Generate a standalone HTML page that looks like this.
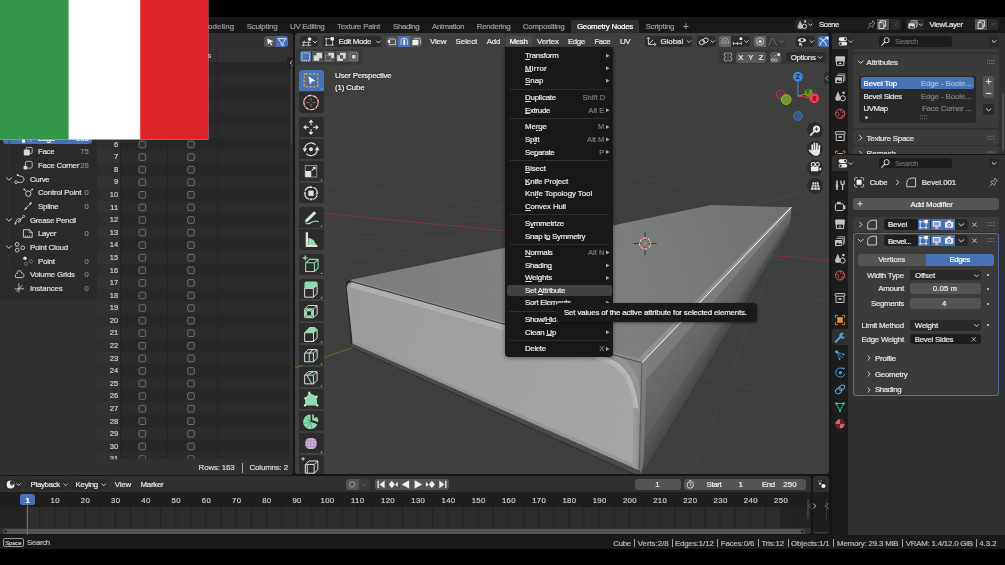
<!DOCTYPE html>
<html><head><meta charset="utf-8"><title>Blender</title>
<style>
html,body{margin:0;padding:0;background:#000;}
body{width:1005px;height:565px;position:relative;overflow:hidden;font-family:"Liberation Sans",sans-serif;}
#root{position:absolute;left:0;top:0;width:1005px;height:565px;overflow:hidden;background:#000;will-change:transform;}
#root div,#root svg,#root span{position:absolute;}
.t{white-space:nowrap;line-height:12px;height:12px;-webkit-text-stroke:0.22px currentColor;}
</style></head><body><div id="root">
<div style="left:0px;top:17px;width:1005px;height:531.5px;background:#161616;"></div>
<div style="left:0px;top:17px;width:1005px;height:16px;background:#181818;"></div>
<span class="t" style="left:201.30px;top:21px;color:#9a9a9a;font-size:7.9px;letter-spacing:0.117px;">Modeling</span>
<span class="t" style="left:246.70px;top:21px;color:#9a9a9a;font-size:7.9px;letter-spacing:-0.189px;">Sculpting</span>
<span class="t" style="left:290.00px;top:21px;color:#9a9a9a;font-size:7.9px;letter-spacing:-0.283px;">UV Editing</span>
<span class="t" style="left:337.00px;top:21px;color:#9a9a9a;font-size:7.9px;letter-spacing:-0.239px;">Texture Paint</span>
<span class="t" style="left:393.00px;top:21px;color:#9a9a9a;font-size:7.9px;letter-spacing:-0.385px;">Shading</span>
<span class="t" style="left:432.00px;top:21px;color:#9a9a9a;font-size:7.9px;letter-spacing:-0.326px;">Animation</span>
<span class="t" style="left:476.80px;top:21px;color:#9a9a9a;font-size:7.9px;letter-spacing:-0.317px;">Rendering</span>
<span class="t" style="left:522.80px;top:21px;color:#9a9a9a;font-size:7.9px;letter-spacing:-0.210px;">Compositing</span>
<span class="t" style="left:645.70px;top:21px;color:#9a9a9a;font-size:7.9px;letter-spacing:-0.237px;">Scripting</span>
<div style="left:571px;top:20px;width:67.5px;height:13px;background:#303030;border-radius:3px 3px 0 0;"></div>
<span class="t" style="left:577.00px;top:21px;color:#ffffff;font-size:7.9px;letter-spacing:-0.265px;">Geometry Nodes</span>
<span class="t" style="left:683.00px;top:21px;color:#9a9a9a;font-size:10px;">+</span>
<div style="left:794.9px;top:19px;width:18.6px;height:11px;background:#282828;border-radius:3px 0 0 3px;"></div>
<div style="left:813.5px;top:19px;width:63.5px;height:11px;background:#1d1d1d;"></div>
<div style="left:877.3px;top:19px;width:12.2px;height:11px;background:#545454;"></div>
<div style="left:889.9px;top:19px;width:11.1px;height:11px;background:#2a2a2a;border-radius:0 3px 3px 0;"></div>
<svg style="left:794.9px;top:19px;" width="107" height="11" viewBox="0 0 107 11"><path d="M5.2,1.4 l2.6,5.8 a2.6,2.6 0 0 1 -5.2,0 Z" fill="#b8b8b8"/><circle cx="9.4" cy="7.4" r="2.2" fill="none" stroke="#e0e0e0" stroke-width="0.9"/><circle cx="10.2" cy="2.4" r="1.1" fill="#e0e0e0"/><polyline points="13.7,5.0 15.4,6.6 17.1,5.0" fill="none" stroke="#d8d8d8" stroke-width="0.9" stroke-linecap="round" stroke-linejoin="round"/><path d="M77.4,1.6 l2.6,2.6 l-0.9,0.4 l-1.3,1.5 l0.2,1.5 l-0.9,0.8 l-3.2,-3.2 l0.8,-0.9 l1.5,0.2 l1.5,-1.3 Z M75.4,6.6 L72.8,9.4" fill="none" stroke="#9a9a9a" stroke-width="0.8" stroke-linejoin="round"/><path d="M85.2,3.8 V1.8 h5.2 v5.6 h-1.6" fill="none" stroke="#e8e8e8" stroke-width="0.9"/><path d="M84,3.6 h3.4 l1.6,1.6 v4.2 h-5 Z" fill="none" stroke="#e8e8e8" stroke-width="0.9" stroke-linejoin="round"/><path d="M98.6,3.4 l4,4.2 M102.6,3.4 l-4,4.2" stroke="#4a4a4a" stroke-width="0.9"/></svg>
<span class="t" style="left:818.90px;top:19px;color:#e2e2e2;font-size:7.9px;letter-spacing:-0.460px;">Scene</span>
<div style="left:905.8px;top:19px;width:18.2px;height:11px;background:#282828;border-radius:3px 0 0 3px;"></div>
<div style="left:924px;top:19px;width:50.8px;height:11px;background:#1d1d1d;"></div>
<div style="left:975.1px;top:19px;width:12.1px;height:11px;background:#545454;"></div>
<div style="left:987.6px;top:19px;width:11.5px;height:11px;background:#2a2a2a;border-radius:0 3px 3px 0;"></div>
<svg style="left:905.8px;top:19px;" width="94" height="11" viewBox="0 0 94 11"><path d="M5,1.6 h6.4 v6" fill="none" stroke="#9a9a9a" stroke-width="0.9"/><path d="M3.8,3 h6.4 v6" fill="none" stroke="#b8b8b8" stroke-width="0.9"/><rect x="2.4" y="4.2" width="6.4" height="5.4" rx="0.6" fill="#e0e0e0"/><path d="M3.2,8.8 l1.8,-2.4 l1.3,1.5 l0.9,-0.9 l1.3,1.8 Z" fill="#282828"/><polyline points="13.1,5.0 14.8,6.6 16.5,5.0" fill="none" stroke="#d8d8d8" stroke-width="0.9" stroke-linecap="round" stroke-linejoin="round"/><path d="M73.2,3.8 V1.8 h5.2 v5.6 h-1.6" fill="none" stroke="#e8e8e8" stroke-width="0.9"/><path d="M72,3.6 h3.4 l1.6,1.6 v4.2 h-5 Z" fill="none" stroke="#e8e8e8" stroke-width="0.9" stroke-linejoin="round"/><path d="M85.6,3.4 l4,4.2 M89.6,3.4 l-4,4.2" stroke="#4a4a4a" stroke-width="0.9"/></svg>
<span class="t" style="left:929.50px;top:19px;color:#e2e2e2;font-size:7.9px;letter-spacing:-0.383px;">ViewLayer</span>
<div style="left:0px;top:33px;width:293px;height:442px;background:#303030;border-radius:0 3px 3px 0;"></div>
<div style="left:0px;top:49px;width:97px;height:250px;background:#2a2a2a;"></div>
<div style="left:97px;top:49px;width:196px;height:12.8px;background:#313131;"></div>
<div style="left:97px;top:61.8px;width:193.4px;height:397.4px;background:#272727;"></div>
<div style="left:97px;top:74.91px;width:193.4px;height:12.58px;background:#2b2b2b;"></div>
<div style="left:97px;top:100.07px;width:193.4px;height:12.58px;background:#2b2b2b;"></div>
<div style="left:97px;top:125.23px;width:193.4px;height:12.58px;background:#2b2b2b;"></div>
<div style="left:97px;top:150.39px;width:193.4px;height:12.58px;background:#2b2b2b;"></div>
<div style="left:97px;top:175.55px;width:193.4px;height:12.58px;background:#2b2b2b;"></div>
<div style="left:97px;top:200.71px;width:193.4px;height:12.58px;background:#2b2b2b;"></div>
<div style="left:97px;top:225.87px;width:193.4px;height:12.58px;background:#2b2b2b;"></div>
<div style="left:97px;top:251.03px;width:193.4px;height:12.58px;background:#2b2b2b;"></div>
<div style="left:97px;top:276.19px;width:193.4px;height:12.58px;background:#2b2b2b;"></div>
<div style="left:97px;top:301.35px;width:193.4px;height:12.58px;background:#2b2b2b;"></div>
<div style="left:97px;top:326.51px;width:193.4px;height:12.58px;background:#2b2b2b;"></div>
<div style="left:97px;top:351.67px;width:193.4px;height:12.58px;background:#2b2b2b;"></div>
<div style="left:97px;top:376.83px;width:193.4px;height:12.58px;background:#2b2b2b;"></div>
<div style="left:97px;top:401.99px;width:193.4px;height:12.58px;background:#2b2b2b;"></div>
<div style="left:97px;top:427.15px;width:193.4px;height:12.58px;background:#2b2b2b;"></div>
<div style="left:97px;top:452.31px;width:193.4px;height:6.89px;background:#2b2b2b;"></div>
<div style="left:97px;top:61.6px;width:23.4px;height:397.6px;background:rgba(255,255,255,0.035);"></div>
<div style="left:120.2px;top:49px;width:0.8px;height:410.2px;background:#232323;"></div>
<div style="left:166.8px;top:49px;width:0.8px;height:410.2px;background:#232323;"></div>
<div style="left:217.2px;top:49px;width:0.8px;height:410.2px;background:#232323;"></div>
<span class="t" style="left:171.50px;top:50px;color:#c8c8c8;font-size:7.9px;letter-spacing:-0.202px;">Bevel Sides</span>
<span class="t" style="left:125.50px;top:50px;color:#c8c8c8;font-size:7.9px;letter-spacing:-0.172px;">Bevel Top</span>
<span class="t" style="left:113.97px;top:63px;color:#cccccc;font-size:7.6px;">0</span>
<span class="t" style="left:113.97px;top:76px;color:#cccccc;font-size:7.6px;">1</span>
<span class="t" style="left:113.97px;top:88px;color:#cccccc;font-size:7.6px;">2</span>
<span class="t" style="left:113.97px;top:101px;color:#cccccc;font-size:7.6px;">3</span>
<span class="t" style="left:113.97px;top:114px;color:#cccccc;font-size:7.6px;">4</span>
<span class="t" style="left:113.97px;top:126px;color:#cccccc;font-size:7.6px;">5</span>
<span class="t" style="left:113.97px;top:139px;color:#cccccc;font-size:7.6px;">6</span>
<span class="t" style="left:113.97px;top:151px;color:#cccccc;font-size:7.6px;">7</span>
<span class="t" style="left:113.97px;top:164px;color:#cccccc;font-size:7.6px;">8</span>
<span class="t" style="left:113.97px;top:176px;color:#cccccc;font-size:7.6px;">9</span>
<span class="t" style="left:109.75px;top:189px;color:#cccccc;font-size:7.6px;">10</span>
<span class="t" style="left:110.31px;top:202px;color:#cccccc;font-size:7.6px;">11</span>
<span class="t" style="left:109.75px;top:214px;color:#cccccc;font-size:7.6px;">12</span>
<span class="t" style="left:109.75px;top:227px;color:#cccccc;font-size:7.6px;">13</span>
<span class="t" style="left:109.75px;top:239px;color:#cccccc;font-size:7.6px;">14</span>
<span class="t" style="left:109.75px;top:252px;color:#cccccc;font-size:7.6px;">15</span>
<span class="t" style="left:109.75px;top:265px;color:#cccccc;font-size:7.6px;">16</span>
<span class="t" style="left:109.75px;top:277px;color:#cccccc;font-size:7.6px;">17</span>
<span class="t" style="left:109.75px;top:290px;color:#cccccc;font-size:7.6px;">18</span>
<span class="t" style="left:109.75px;top:302px;color:#cccccc;font-size:7.6px;">19</span>
<span class="t" style="left:109.75px;top:315px;color:#cccccc;font-size:7.6px;">20</span>
<span class="t" style="left:109.75px;top:327px;color:#cccccc;font-size:7.6px;">21</span>
<span class="t" style="left:109.75px;top:340px;color:#cccccc;font-size:7.6px;">22</span>
<span class="t" style="left:109.75px;top:353px;color:#cccccc;font-size:7.6px;">23</span>
<span class="t" style="left:109.75px;top:365px;color:#cccccc;font-size:7.6px;">24</span>
<span class="t" style="left:109.75px;top:378px;color:#cccccc;font-size:7.6px;">25</span>
<span class="t" style="left:109.75px;top:390px;color:#cccccc;font-size:7.6px;">26</span>
<span class="t" style="left:109.75px;top:403px;color:#cccccc;font-size:7.6px;">27</span>
<span class="t" style="left:109.75px;top:416px;color:#cccccc;font-size:7.6px;">28</span>
<span class="t" style="left:109.75px;top:428px;color:#cccccc;font-size:7.6px;">29</span>
<span class="t" style="left:109.75px;top:441px;color:#cccccc;font-size:7.6px;">30</span>
<span class="t" style="left:109.75px;top:453px;color:#cccccc;font-size:7.6px;clip-path:inset(0 0 5.4px 0);">31</span>
<svg style="left:0px;top:61.6px;" width="293" height="397.6" viewBox="0 0 293 397.6"><rect x="139.05" y="3.72" width="6.6" height="6.6" rx="1.2" fill="#2d2d2d" stroke="#777777" stroke-width="0.9"/><rect x="187.70" y="3.72" width="6.6" height="6.6" rx="1.2" fill="#2d2d2d" stroke="#777777" stroke-width="0.9"/><rect x="139.05" y="16.30" width="6.6" height="6.6" rx="1.2" fill="#2d2d2d" stroke="#777777" stroke-width="0.9"/><rect x="187.70" y="16.30" width="6.6" height="6.6" rx="1.2" fill="#2d2d2d" stroke="#777777" stroke-width="0.9"/><rect x="139.05" y="28.88" width="6.6" height="6.6" rx="1.2" fill="#2d2d2d" stroke="#777777" stroke-width="0.9"/><rect x="187.70" y="28.88" width="6.6" height="6.6" rx="1.2" fill="#2d2d2d" stroke="#777777" stroke-width="0.9"/><rect x="139.05" y="41.46" width="6.6" height="6.6" rx="1.2" fill="#2d2d2d" stroke="#777777" stroke-width="0.9"/><rect x="187.70" y="41.46" width="6.6" height="6.6" rx="1.2" fill="#2d2d2d" stroke="#777777" stroke-width="0.9"/><rect x="139.05" y="54.04" width="6.6" height="6.6" rx="1.2" fill="#2d2d2d" stroke="#777777" stroke-width="0.9"/><rect x="187.70" y="54.04" width="6.6" height="6.6" rx="1.2" fill="#2d2d2d" stroke="#777777" stroke-width="0.9"/><rect x="139.05" y="66.62" width="6.6" height="6.6" rx="1.2" fill="#2d2d2d" stroke="#777777" stroke-width="0.9"/><rect x="187.70" y="66.62" width="6.6" height="6.6" rx="1.2" fill="#2d2d2d" stroke="#777777" stroke-width="0.9"/><rect x="139.05" y="79.20" width="6.6" height="6.6" rx="1.2" fill="#2d2d2d" stroke="#777777" stroke-width="0.9"/><rect x="187.70" y="79.20" width="6.6" height="6.6" rx="1.2" fill="#2d2d2d" stroke="#777777" stroke-width="0.9"/><rect x="139.05" y="91.78" width="6.6" height="6.6" rx="1.2" fill="#2d2d2d" stroke="#777777" stroke-width="0.9"/><rect x="187.70" y="91.78" width="6.6" height="6.6" rx="1.2" fill="#2d2d2d" stroke="#777777" stroke-width="0.9"/><rect x="139.05" y="104.36" width="6.6" height="6.6" rx="1.2" fill="#2d2d2d" stroke="#777777" stroke-width="0.9"/><rect x="187.70" y="104.36" width="6.6" height="6.6" rx="1.2" fill="#2d2d2d" stroke="#777777" stroke-width="0.9"/><rect x="139.05" y="116.94" width="6.6" height="6.6" rx="1.2" fill="#2d2d2d" stroke="#777777" stroke-width="0.9"/><rect x="187.70" y="116.94" width="6.6" height="6.6" rx="1.2" fill="#2d2d2d" stroke="#777777" stroke-width="0.9"/><rect x="139.05" y="129.52" width="6.6" height="6.6" rx="1.2" fill="#2d2d2d" stroke="#777777" stroke-width="0.9"/><rect x="187.70" y="129.52" width="6.6" height="6.6" rx="1.2" fill="#2d2d2d" stroke="#777777" stroke-width="0.9"/><rect x="139.05" y="142.10" width="6.6" height="6.6" rx="1.2" fill="#2d2d2d" stroke="#777777" stroke-width="0.9"/><rect x="187.70" y="142.10" width="6.6" height="6.6" rx="1.2" fill="#2d2d2d" stroke="#777777" stroke-width="0.9"/><rect x="139.05" y="154.68" width="6.6" height="6.6" rx="1.2" fill="#2d2d2d" stroke="#777777" stroke-width="0.9"/><rect x="187.70" y="154.68" width="6.6" height="6.6" rx="1.2" fill="#2d2d2d" stroke="#777777" stroke-width="0.9"/><rect x="139.05" y="167.26" width="6.6" height="6.6" rx="1.2" fill="#2d2d2d" stroke="#777777" stroke-width="0.9"/><rect x="187.70" y="167.26" width="6.6" height="6.6" rx="1.2" fill="#2d2d2d" stroke="#777777" stroke-width="0.9"/><rect x="139.05" y="179.84" width="6.6" height="6.6" rx="1.2" fill="#2d2d2d" stroke="#777777" stroke-width="0.9"/><rect x="187.70" y="179.84" width="6.6" height="6.6" rx="1.2" fill="#2d2d2d" stroke="#777777" stroke-width="0.9"/><rect x="139.05" y="192.42" width="6.6" height="6.6" rx="1.2" fill="#2d2d2d" stroke="#777777" stroke-width="0.9"/><rect x="187.70" y="192.42" width="6.6" height="6.6" rx="1.2" fill="#2d2d2d" stroke="#777777" stroke-width="0.9"/><rect x="139.05" y="205.00" width="6.6" height="6.6" rx="1.2" fill="#2d2d2d" stroke="#777777" stroke-width="0.9"/><rect x="187.70" y="205.00" width="6.6" height="6.6" rx="1.2" fill="#2d2d2d" stroke="#777777" stroke-width="0.9"/><rect x="139.05" y="217.58" width="6.6" height="6.6" rx="1.2" fill="#2d2d2d" stroke="#777777" stroke-width="0.9"/><rect x="187.70" y="217.58" width="6.6" height="6.6" rx="1.2" fill="#2d2d2d" stroke="#777777" stroke-width="0.9"/><rect x="139.05" y="230.16" width="6.6" height="6.6" rx="1.2" fill="#2d2d2d" stroke="#777777" stroke-width="0.9"/><rect x="187.70" y="230.16" width="6.6" height="6.6" rx="1.2" fill="#2d2d2d" stroke="#777777" stroke-width="0.9"/><rect x="139.05" y="242.74" width="6.6" height="6.6" rx="1.2" fill="#2d2d2d" stroke="#777777" stroke-width="0.9"/><rect x="187.70" y="242.74" width="6.6" height="6.6" rx="1.2" fill="#2d2d2d" stroke="#777777" stroke-width="0.9"/><rect x="139.05" y="255.32" width="6.6" height="6.6" rx="1.2" fill="#2d2d2d" stroke="#777777" stroke-width="0.9"/><rect x="187.70" y="255.32" width="6.6" height="6.6" rx="1.2" fill="#2d2d2d" stroke="#777777" stroke-width="0.9"/><rect x="139.05" y="267.90" width="6.6" height="6.6" rx="1.2" fill="#2d2d2d" stroke="#777777" stroke-width="0.9"/><rect x="187.70" y="267.90" width="6.6" height="6.6" rx="1.2" fill="#2d2d2d" stroke="#777777" stroke-width="0.9"/><rect x="139.05" y="280.48" width="6.6" height="6.6" rx="1.2" fill="#2d2d2d" stroke="#777777" stroke-width="0.9"/><rect x="187.70" y="280.48" width="6.6" height="6.6" rx="1.2" fill="#2d2d2d" stroke="#777777" stroke-width="0.9"/><rect x="139.05" y="293.06" width="6.6" height="6.6" rx="1.2" fill="#2d2d2d" stroke="#777777" stroke-width="0.9"/><rect x="187.70" y="293.06" width="6.6" height="6.6" rx="1.2" fill="#2d2d2d" stroke="#777777" stroke-width="0.9"/><rect x="139.05" y="305.64" width="6.6" height="6.6" rx="1.2" fill="#2d2d2d" stroke="#777777" stroke-width="0.9"/><rect x="187.70" y="305.64" width="6.6" height="6.6" rx="1.2" fill="#2d2d2d" stroke="#777777" stroke-width="0.9"/><rect x="139.05" y="318.22" width="6.6" height="6.6" rx="1.2" fill="#2d2d2d" stroke="#777777" stroke-width="0.9"/><rect x="187.70" y="318.22" width="6.6" height="6.6" rx="1.2" fill="#2d2d2d" stroke="#777777" stroke-width="0.9"/><rect x="139.05" y="330.80" width="6.6" height="6.6" rx="1.2" fill="#2d2d2d" stroke="#777777" stroke-width="0.9"/><rect x="187.70" y="330.80" width="6.6" height="6.6" rx="1.2" fill="#2d2d2d" stroke="#777777" stroke-width="0.9"/><rect x="139.05" y="343.38" width="6.6" height="6.6" rx="1.2" fill="#2d2d2d" stroke="#777777" stroke-width="0.9"/><rect x="187.70" y="343.38" width="6.6" height="6.6" rx="1.2" fill="#2d2d2d" stroke="#777777" stroke-width="0.9"/><rect x="139.05" y="355.96" width="6.6" height="6.6" rx="1.2" fill="#2d2d2d" stroke="#777777" stroke-width="0.9"/><rect x="187.70" y="355.96" width="6.6" height="6.6" rx="1.2" fill="#2d2d2d" stroke="#777777" stroke-width="0.9"/><rect x="139.05" y="368.54" width="6.6" height="6.6" rx="1.2" fill="#2d2d2d" stroke="#777777" stroke-width="0.9"/><rect x="187.70" y="368.54" width="6.6" height="6.6" rx="1.2" fill="#2d2d2d" stroke="#777777" stroke-width="0.9"/><rect x="139.05" y="381.12" width="6.6" height="6.6" rx="1.2" fill="#2d2d2d" stroke="#777777" stroke-width="0.9"/><rect x="187.70" y="381.12" width="6.6" height="6.6" rx="1.2" fill="#2d2d2d" stroke="#777777" stroke-width="0.9"/><path d="M139.2,397.6 V394.7 Q139.2,393.7 140.2,393.7 H144.5 Q145.5,393.7 145.5,394.7 V397.6" fill="none" stroke="#6e6e6e" stroke-width="0.8"/><path d="M187.8,397.6 V394.7 Q187.8,393.7 188.8,393.7 H193.2 Q194.2,393.7 194.2,394.7 V397.6" fill="none" stroke="#6e6e6e" stroke-width="0.8"/></svg>
<span class="t" style="left:198.60px;top:462px;color:#d8d8d8;font-size:7.9px;letter-spacing:-0.147px;">Rows: 163</span>
<div style="left:242.1px;top:462.5px;width:0.9px;height:10px;background:#b0b0b0;"></div>
<span class="t" style="left:249.50px;top:462px;color:#d8d8d8;font-size:7.9px;letter-spacing:-0.146px;">Columns: 2</span>
<div style="left:263.7px;top:35.5px;width:12.2px;height:11.7px;background:#545454;border-radius:3px 0 0 3px;"></div>
<div style="left:275.9px;top:35.5px;width:12.1px;height:11.7px;background:#4772b3;border-radius:0 3px 3px 0;"></div>
<svg style="left:263.7px;top:35.5px;" width="24.4" height="11.7" viewBox="0 0 24.4 11.7"><path d="M3.2,2.6 L9.6,5.2 L6.9,6.2 L8.3,9 L7.2,9.5 L5.9,6.8 L3.9,8.6 Z" fill="#f0f0f0"/><path d="M14,2.7 H22.2 L19.1,6.3 V9.6 L17.1,8.6 V6.3 Z" fill="none" stroke="#f4f4f4" stroke-width="0.9" stroke-linejoin="round"/></svg>
<div style="left:287.4px;top:57.4px;width:5.6px;height:11.4px;background:#232323;border-radius:3px 0 0 3px;"></div>
<svg style="left:287px;top:58px;" width="8" height="10" viewBox="0 0 8 10"><polyline points="5.5,2.6 3.1,5.0 5.5,7.4" fill="none" stroke="#b8b8b8" stroke-width="0.9" stroke-linecap="round" stroke-linejoin="round"/></svg>
<div style="left:290.7px;top:62px;width:1.7px;height:81.3px;background:#464646;border-radius:1px;"></div>
<div style="left:3px;top:131.6px;width:89px;height:12.2px;background:#4772b3;border-radius:3px;"></div>
<span class="t" style="left:38.00px;top:133px;color:#ffffff;font-size:7.9px;letter-spacing:-0.463px;">Edge</span>
<span class="t" style="left:76.12px;top:133px;color:#dfe6f2;font-size:7.6px;">163</span>
<svg style="left:20px;top:131px;" width="14" height="12" viewBox="0 0 14 12"><path d="M3.4,10.4 V4 H9.8" fill="none" stroke="#ffffff" stroke-width="0.9"/><rect x="2" y="8.6" width="3" height="3" fill="#ffffff"/><path d="M5.8,6 h5 v5" fill="none" stroke="#d0d8e8" stroke-width="0.7"/></svg>
<span class="t" style="left:38.00px;top:146px;color:#dedede;font-size:7.9px;letter-spacing:-0.341px;">Face</span>
<span class="t" style="left:80.35px;top:146px;color:#858585;font-size:7.6px;">75</span>
<span class="t" style="left:38.00px;top:160px;color:#dedede;font-size:7.9px;letter-spacing:-0.255px;">Face Corner</span>
<span class="t" style="left:80.35px;top:160px;color:#858585;font-size:7.6px;">26</span>
<span class="t" style="left:29.90px;top:174px;color:#dedede;font-size:7.9px;letter-spacing:-0.295px;">Curve</span>
<span class="t" style="left:38.00px;top:187px;color:#dedede;font-size:7.9px;letter-spacing:-0.182px;">Control Point</span>
<span class="t" style="left:84.57px;top:187px;color:#858585;font-size:7.6px;">0</span>
<span class="t" style="left:38.00px;top:201px;color:#dedede;font-size:7.9px;letter-spacing:-0.244px;">Spline</span>
<span class="t" style="left:84.57px;top:201px;color:#858585;font-size:7.6px;">0</span>
<span class="t" style="left:29.90px;top:215px;color:#dedede;font-size:7.9px;letter-spacing:-0.278px;">Grease Pencil</span>
<span class="t" style="left:38.00px;top:228px;color:#dedede;font-size:7.9px;letter-spacing:-0.352px;">Layer</span>
<span class="t" style="left:84.57px;top:228px;color:#858585;font-size:7.6px;">0</span>
<span class="t" style="left:29.90px;top:242px;color:#dedede;font-size:7.9px;letter-spacing:-0.259px;">Point Cloud</span>
<span class="t" style="left:38.00px;top:256px;color:#dedede;font-size:7.9px;letter-spacing:-0.261px;">Point</span>
<span class="t" style="left:84.57px;top:256px;color:#858585;font-size:7.6px;">0</span>
<span class="t" style="left:29.90px;top:269px;color:#dedede;font-size:7.9px;letter-spacing:-0.202px;">Volume Grids</span>
<span class="t" style="left:84.57px;top:269px;color:#858585;font-size:7.6px;">0</span>
<span class="t" style="left:29.90px;top:283px;color:#dedede;font-size:7.9px;letter-spacing:-0.113px;">Instances</span>
<span class="t" style="left:84.57px;top:283px;color:#858585;font-size:7.6px;">0</span>
<svg style="left:0px;top:0px;" width="97" height="300" viewBox="0 0 97 300"><rect x="26.2" y="147.4" width="6" height="6" rx="1" fill="none" stroke="#d6d6d6" stroke-width="0.8"/><rect x="23.8" y="149.6" width="6" height="6" rx="1" fill="#d6d6d6"/><rect x="25.4" y="161.3" width="6.8" height="6.8" rx="1.5" fill="none" stroke="#d6d6d6" stroke-width="0.8"/><rect x="23.6" y="165.9" width="3.6" height="3.6" fill="#d6d6d6"/><path d="M17.3,182.4 H20.9 C24.9,182.4 24.9,176.4 21.1,176.2 C19.9,176.2 18.9,176.0 17.9,175.2" fill="none" stroke="#d6d6d6" stroke-width="0.9"/><circle cx="16.1" cy="182.2" r="1.4" fill="#2a2a2a" stroke="#d6d6d6" stroke-width="0.8"/><circle cx="17.7" cy="175.0" r="1" fill="#d6d6d6"/><polyline points="6.5,177.8 9.0,180.2 11.5,177.8" fill="none" stroke="#d0d0d0" stroke-width="1.0" stroke-linecap="round" stroke-linejoin="round"/><circle cx="28.3" cy="193.7" r="2.7" fill="none" stroke="#d6d6d6" stroke-width="0.9"/><path d="M24.2,189.5 L26.4,190.9 M32.2,189.5 L30.2,190.9" stroke="#d6d6d6" stroke-width="0.9"/><circle cx="24.2" cy="189.3" r="0.9" fill="#d6d6d6"/><circle cx="32.4" cy="189.3" r="0.9" fill="#d6d6d6"/><path d="M24.2,210.2 L31.8,202.2" stroke="#d6d6d6" stroke-width="0.8"/><circle cx="25.8" cy="208.5" r="1.1" fill="#d6d6d6"/><circle cx="30.4" cy="203.7" r="1.1" fill="#d6d6d6"/><path d="M15.5,223.5 C16.5,218.0 20.5,217.0 20.5,220.0 C20.5,223.0 17.5,223.0 18.5,221.0 C19.5,219.0 22.5,219.0 23.5,216.6" fill="none" stroke="#d6d6d6" stroke-width="0.9"/><circle cx="15.5" cy="223.4" r="1" fill="#d6d6d6"/><circle cx="23.7" cy="216.4" r="1.1" fill="#2a2a2a" stroke="#d6d6d6" stroke-width="0.7"/><polyline points="6.5,218.8 9.0,221.2 11.5,218.8" fill="none" stroke="#d0d0d0" stroke-width="1.0" stroke-linecap="round" stroke-linejoin="round"/><path d="M23.4,229.7 H29.6 L32.2,232.3 V237.3 H23.4 Z" fill="none" stroke="#d6d6d6" stroke-width="0.9" stroke-linejoin="miter"/><path d="M29.4,229.7 V232.5 H32.2" fill="none" stroke="#d6d6d6" stroke-width="0.7"/><path d="M25.3,237.1 V235.5 M27.3,237.1 V235.5 M29.3,237.1 V235.5" stroke="#d6d6d6" stroke-width="0.8"/><circle cx="17.1" cy="244.4" r="1.9" fill="none" stroke="#d6d6d6" stroke-width="0.9"/><circle cx="17.3" cy="250.2" r="1.9" fill="none" stroke="#d6d6d6" stroke-width="0.9"/><circle cx="22.7" cy="247.8" r="1.9" fill="none" stroke="#d6d6d6" stroke-width="0.9"/><polyline points="6.5,245.9 9.0,248.4 11.5,245.9" fill="none" stroke="#d0d0d0" stroke-width="1.0" stroke-linecap="round" stroke-linejoin="round"/><circle cx="25.0" cy="258.2" r="1.8" fill="#d6d6d6"/><circle cx="25.8" cy="263.8" r="1.6" fill="none" stroke="#8a8a8a" stroke-width="0.7"/><circle cx="30.8" cy="261.4" r="1.6" fill="none" stroke="#8a8a8a" stroke-width="0.7"/><path d="M15.7,277.6 C14.3,275.4 16.0,273.4 17.3,273.4 C17.0,269.9 21.5,269.6 21.5,273.0 C24.0,273.0 24.7,276.4 22.9,277.6 Z" fill="none" stroke="#d6d6d6" stroke-width="0.9" stroke-linejoin="round"/><path d="M14.7,288.8 H24.1 M18.9,283.4 V292.6 M18.9,288.8 L22.5,285.4 M18.9,288.8 L16.3,291.6" stroke="#d6d6d6" stroke-width="0.8"/><path d="M9.2,140 V172 M9.2,186 V213 M9.2,227 V240 M9.2,254 V268" stroke="#3f3f3f" stroke-width="0.7"/></svg>
<div style="left:295.2px;top:33px;width:533.8px;height:441.4px;background:#3f3f3f;border-radius:3px;"></div>
<svg style="left:295.2px;top:33px;border-radius:3px;overflow:hidden;" width="533.8" height="441.4" viewBox="0 0 533.8 441.4"><defs><linearGradient id="gTop" gradientUnits="userSpaceOnUse" x1="494.8" y1="167" x2="124.8" y2="297"><stop offset="0" stop-color="#6f7071"/><stop offset="0.3" stop-color="#797a7b"/><stop offset="0.7" stop-color="#828384"/><stop offset="1" stop-color="#7c7d7e"/></linearGradient><linearGradient id="gRight" gradientUnits="userSpaceOnUse" x1="404.8" y1="257" x2="444.8" y2="297"><stop offset="0" stop-color="#7b7c7d"/><stop offset="1" stop-color="#545556"/></linearGradient><linearGradient id="gFront" gradientUnits="userSpaceOnUse" x1="54.8" y1="267" x2="344.8" y2="387"><stop offset="0" stop-color="#9b9d9d"/><stop offset="1" stop-color="#a5a7a7"/></linearGradient></defs><line x1="0.8" y1="267.5" x2="53.8" y2="248.0" stroke="#494949" stroke-width="0.7"/><line x1="0.8" y1="229.0" x2="124.8" y2="219.0" stroke="#494949" stroke-width="0.7"/><line x1="0.8" y1="203.0" x2="174.8" y2="207.0" stroke="#494949" stroke-width="0.7"/><line x1="124.8" y1="182.0" x2="264.8" y2="195.0" stroke="#494949" stroke-width="0.7"/><line x1="304.8" y1="137.0" x2="533.8" y2="182.0" stroke="#494949" stroke-width="0.7"/><line x1="404.8" y1="207.0" x2="533.8" y2="239.0" stroke="#494949" stroke-width="0.7"/><line x1="456.8" y1="254.5" x2="533.8" y2="268.7" stroke="#494949" stroke-width="0.7"/><line x1="394.8" y1="339.0" x2="533.8" y2="377.0" stroke="#494949" stroke-width="0.7"/><line x1="504.8" y1="157.0" x2="397.3" y2="441.0" stroke="#494949" stroke-width="0.7"/><line x1="533.8" y1="257.0" x2="424.8" y2="441.0" stroke="#494949" stroke-width="0.7"/><line x1="0.8" y1="147.0" x2="264.8" y2="182.0" stroke="#494949" stroke-width="0.7"/><line x1="0.8" y1="367.0" x2="34.8" y2="441.0" stroke="#494949" stroke-width="0.7"/><line x1="0.8" y1="297.0" x2="50.8" y2="310.0" stroke="#494949" stroke-width="0.7"/><line x1="0" y1="177.7" x2="244.8" y2="201.1" stroke="#83393f" stroke-width="0.9"/><line x1="476.7" y1="222.3" x2="534.8" y2="227.8" stroke="#8a3038" stroke-width="0.9"/><line x1="62.9" y1="312.7" x2="0" y2="334.8" stroke="#55821f" stroke-width="0.9"/><line x1="456.8" y1="173.0" x2="533.8" y2="151.0" stroke="#485a30" stroke-width="0.6"/><polygon points="56.0,309.0 344.1,435.0 347.2,438.5 345.3,444.0 56.8,314.4" fill="#4a4b4b"/><line x1="56.8" y1="314.4" x2="345.3" y2="444.0" stroke="#2b2b2b" stroke-width="0.9"/><polygon points="50.4,248.6 54.7,246.9 56.8,267.0 57.7,310.5 55.8,311.0" fill="#2a2a2a"/><polygon points="346.9,329.8 496.4,174.3 494.5,192.7 346.3,439.8" fill="#7b7c7d"/><polygon points="346.8,351.8 496.0,178.0 494.5,192.7 346.3,439.8" fill="#6a6b6c"/><polygon points="346.7,361.7 495.8,179.6 494.5,192.7 346.3,439.8" fill="#68696a"/><polygon points="346.7,371.6 495.7,181.3 494.5,192.7 346.3,439.8" fill="#666768"/><polygon points="346.6,381.5 495.5,182.9 494.5,192.7 346.3,439.8" fill="#646566"/><polygon points="346.6,391.4 495.3,184.6 494.5,192.7 346.3,439.8" fill="#626364"/><polygon points="346.5,401.3 495.2,186.3 494.5,192.7 346.3,439.8" fill="#606162"/><polygon points="346.5,411.2 495.0,187.9 494.5,192.7 346.3,439.8" fill="#575859"/><polygon points="346.4,418.4 494.9,189.1 494.5,192.7 346.3,439.8" fill="#535455"/><polygon points="346.4,425.5 494.7,190.3 494.5,192.7 346.3,439.8" fill="#4f5051"/><polygon points="346.3,432.7 494.6,191.5 494.5,192.7 346.3,439.8" fill="#4b4c4d"/><polygon points="346.9,329.8 353.3,323.2 351.3,347.0 348.6,429.0 346.3,439.8 343.9,437.1" fill="#818283" opacity="0.75"/><polygon points="54.7,246.9 416.3,172.1 496.4,174.3 346.9,329.8" fill="url(#gTop)"/><polygon points="346.9,329.8 496.4,174.3 494.2,174.3 340.4,328.0" fill="#8f9091"/><line x1="340.4" y1="328.0" x2="494.2" y2="174.3" stroke="#757677" stroke-width="0.6"/><polygon points="51.7,254.0 53.3,250.2 57.3,249.3 346.9,329.8 343.9,437.1 57.7,310.5" fill="url(#gFront)"/><polygon points="57.4,307.6 344.0,433.2 343.9,437.1 57.7,310.5" fill="#959797"/><polygon points="57.3,249.6 346.9,329.8 346.7,335.6 54.4,253.2" fill="#adafaf"/><line x1="54.4" y1="253.4" x2="310.8" y2="325.4" stroke="#b9bbbb" stroke-width="0.7"/><path d="M300.8,317.2 L346.9,329.8 L345.2,391.0 L342.4,391.0 C341.8,352.0 332.8,329.0 298.8,322.2 Z" fill="#939595"/><path d="M324.8,323.8 L346.9,329.8 L346.1,361.0 C343.4,343.0 336.8,331.0 324.8,323.8 Z" fill="#868888"/><path d="M300.8,324.2 C330.8,330.0 340.2,352.0 341.8,387.0" fill="none" stroke="#b3b5b5" stroke-width="4"/><path d="M304.8,323.6 C332.8,329.0 341.4,351.0 343.0,383.0" fill="none" stroke="#c0c2c2" stroke-width="1.2"/><polygon points="338.2,375.0 345.5,375.0 343.9,437.1 337.8,434.4" fill="#989a9a"/><polygon points="341.8,379.0 345.4,379.0 343.9,437.1 341.4,436.0" fill="#8f9191"/><polygon points="55.8,248.3 346.9,329.8 345.4,326.4 57.2,246.9" fill="#8e8f90" opacity="0.85"/><line x1="55.8" y1="248.3" x2="346.9" y2="329.8" stroke="#3a3b3b" stroke-width="0.8"/><line x1="346.9" y1="329.8" x2="343.9" y2="437.1" stroke="#3c3c3c" stroke-width="0.6"/><line x1="346.9" y1="329.8" x2="496.4" y2="174.3" stroke="#ffffff" stroke-width="1"/></svg>
<div style="left:300px;top:35.7px;width:18px;height:11px;background:#2b2b2b;border-radius:3px;"></div>
<svg style="left:300px;top:35.7px;" width="18" height="11" viewBox="0 0 18 11"><path d="M1.8,6.4 H11 M1.6,9.2 H11.2 M4.4,4.4 L3,10.6 M8.2,5 L9,10.6" stroke="#d8d8d8" stroke-width="0.8" fill="none"/><circle cx="9.6" cy="3.1" r="2.1" fill="#ececec" stroke="#2b2b2b" stroke-width="0.6"/><polyline points="13.1,5.0 15.0,7.0 16.9,5.0" fill="none" stroke="#d8d8d8" stroke-width="0.9" stroke-linecap="round" stroke-linejoin="round"/></svg>
<div style="left:322.7px;top:35.7px;width:58.6px;height:11px;background:#2b2b2b;border-radius:3px;"></div>
<svg style="left:322.7px;top:35.7px;" width="58.6" height="11" viewBox="0 0 58.6 11"><rect x="3.2" y="2.7" width="6.4" height="6.4" fill="none" stroke="#c4c4c4" stroke-width="0.8"/><rect x="7.6" y="1.1" width="3.3" height="3.3" fill="#f4f4f4"/><circle cx="3.2" cy="2.7" r="1" fill="#c4c4c4"/><circle cx="3.2" cy="9.1" r="1" fill="#c4c4c4"/><circle cx="9.6" cy="9.1" r="1" fill="#c4c4c4"/><polyline points="53.5,5.0 55.4,7.0 57.3,5.0" fill="none" stroke="#d8d8d8" stroke-width="0.9" stroke-linecap="round" stroke-linejoin="round"/></svg>
<span class="t" style="left:338.50px;top:36px;color:#e4e4e4;font-size:7.9px;letter-spacing:-0.319px;">Edit Mode</span>
<div style="left:385.5px;top:35.7px;width:12px;height:11px;background:#545454;border-radius:3px 0 0 3px;"></div>
<div style="left:397.5px;top:35.7px;width:12.2px;height:11px;background:#4772b3;"></div>
<div style="left:409.8px;top:35.7px;width:12.1px;height:11px;background:#545454;border-radius:0 3px 3px 0;"></div>
<svg style="left:385.5px;top:35.7px;" width="36.5" height="11" viewBox="0 0 36.5 11"><path d="M3.4,3 H8 Q9.6,3 9.6,4.6 V8.6 H3.4 Z" fill="none" stroke="#d0d0d0" stroke-width="0.8"/><rect x="1.8" y="4.2" width="2.4" height="2.4" fill="#f4f4f4"/><path d="M15,8.8 V4.4 Q15,2.4 17,2.4 H19.4 Q21.4,2.4 21.4,4.4 V8.8" fill="none" stroke="#e8e8e8" stroke-width="0.8"/><rect x="17.4" y="3.4" width="1.7" height="5.6" fill="#ffffff"/><path d="M28.2,2.4 H33 Q34.4,2.4 34.4,3.8 V8" fill="none" stroke="#d0d0d0" stroke-width="0.8"/><rect x="26.4" y="3.8" width="6" height="5.4" fill="#f0f0f0"/></svg>
<div style="left:505.7px;top:35.7px;width:26.3px;height:11.6px;background:#4a4a4a;border-radius:3px 3px 0 0;"></div>
<span class="t" style="left:430.10px;top:36px;color:#e4e4e4;font-size:7.9px;letter-spacing:-0.220px;">View</span>
<span class="t" style="left:455.60px;top:36px;color:#e4e4e4;font-size:7.9px;letter-spacing:-0.043px;">Select</span>
<span class="t" style="left:486.80px;top:36px;color:#e4e4e4;font-size:7.9px;letter-spacing:-0.286px;">Add</span>
<span class="t" style="left:509.40px;top:36px;color:#ffffff;font-size:7.9px;letter-spacing:-0.280px;">Mesh</span>
<span class="t" style="left:537.00px;top:36px;color:#e4e4e4;font-size:7.9px;letter-spacing:-0.066px;">Vertex</span>
<span class="t" style="left:567.90px;top:36px;color:#e4e4e4;font-size:7.9px;letter-spacing:-0.388px;">Edge</span>
<span class="t" style="left:594.50px;top:36px;color:#e4e4e4;font-size:7.9px;letter-spacing:-0.466px;">Face</span>
<span class="t" style="left:620.00px;top:36px;color:#e4e4e4;font-size:7.9px;letter-spacing:-0.487px;">UV</span>
<div style="left:296px;top:48.5px;width:67.4px;height:16.5px;background:#383838;border-radius:0 0 4px 0;"></div>
<div style="left:299.7px;top:51.3px;width:11.6px;height:11.2px;background:#4772b3;border-radius:3px 0 0 3px;"></div>
<div style="left:311.7px;top:51.3px;width:11.5px;height:11.2px;background:#545454;"></div>
<div style="left:323.6px;top:51.3px;width:11.5px;height:11.2px;background:#545454;"></div>
<div style="left:335.5px;top:51.3px;width:11.5px;height:11.2px;background:#545454;"></div>
<div style="left:347.4px;top:51.3px;width:11.5px;height:11.2px;background:#545454;border-radius:0 3px 3px 0;"></div>
<svg style="left:299.7px;top:51.3px;" width="60" height="11.2" viewBox="0 0 60 11.2"><rect x="2" y="2" width="7.6" height="7.4" fill="none" stroke="#e8e8e8" stroke-width="1" stroke-dasharray="1.2 1"/><rect x="16.4" y="1.8" width="5.6" height="5.4" fill="#d8d8d8"/><rect x="13.6" y="4.4" width="5.6" height="5.4" fill="#d8d8d8"/><path d="M28.4,1.8 H34 V7.2 H31.4 V4.4 H28.4 Z" fill="#d8d8d8"/><rect x="25.6" y="4.6" width="5.4" height="5.2" fill="none" stroke="#bdbdbd" stroke-width="0.8" stroke-dasharray="1 1"/><rect x="40" y="1.8" width="5.8" height="5.8" fill="#d4d4d4"/><rect x="37.2" y="4.2" width="5.8" height="5.8" fill="#d4d4d4"/><rect x="40" y="4.2" width="3" height="3.4" fill="#545454"/><rect x="50" y="2" width="7.4" height="7.4" fill="none" stroke="#bdbdbd" stroke-width="0.8" stroke-dasharray="1 1"/><rect x="52" y="4" width="3.6" height="3.6" fill="#d0d0d0"/></svg>
<div style="left:644.5px;top:36px;width:47.7px;height:10.8px;background:#2b2b2b;border-radius:3px;"></div>
<svg style="left:644.5px;top:36px;" width="47.7" height="10.8" viewBox="0 0 47.7 10.8"><path d="M3.4,1.6 V8.4 H10.6 M3.4,8.4 L8.2,3.8" fill="none" stroke="#dcdcdc" stroke-width="0.9"/><path d="M1.8,3.2 L3.4,1 L5,3.2 M9,6.8 L11.2,8.4 L9,10" fill="none" stroke="#dcdcdc" stroke-width="0.8"/><polyline points="42.1,4.6 44.0,6.5 45.9,4.6" fill="none" stroke="#d8d8d8" stroke-width="0.9" stroke-linecap="round" stroke-linejoin="round"/></svg>
<span class="t" style="left:660.40px;top:36px;color:#e4e4e4;font-size:7.9px;letter-spacing:0.011px;">Global</span>
<div style="left:696.5px;top:36px;width:19.5px;height:10.8px;background:#2b2b2b;border-radius:3px;"></div>
<svg style="left:696.5px;top:36px;" width="19.5" height="10.8" viewBox="0 0 19.5 10.8"><ellipse cx="5" cy="6.2" rx="2.8" ry="2.3" fill="none" stroke="#dcdcdc" stroke-width="0.9" transform="rotate(-35 5 6.2)"/><ellipse cx="8.6" cy="4.4" rx="2.8" ry="2.3" fill="none" stroke="#dcdcdc" stroke-width="0.9" transform="rotate(-35 8.6 4.4)"/><polyline points="13.9,4.6 15.8,6.5 17.7,4.6" fill="none" stroke="#d8d8d8" stroke-width="0.9" stroke-linecap="round" stroke-linejoin="round"/></svg>
<div style="left:718.5px;top:36px;width:12.2px;height:10.8px;background:#656565;border-radius:3px 0 0 3px;"></div>
<div style="left:730.7px;top:36px;width:19.3px;height:10.8px;background:#2b2b2b;border-radius:0 3px 3px 0;"></div>
<svg style="left:718.5px;top:36px;" width="31.5" height="10.8" viewBox="0 0 31.5 10.8"><path d="M3,8 V5.4 A3.2,3.2 0 0 1 9.4,5.4 V8 M5.2,8 V5.6 A1,1 0 0 1 7.2,5.6 V8" fill="none" stroke="#a8a8a8" stroke-width="0.9"/><path d="M14.4,7.6 H22.4 M14.4,5.8 V9 M22.4,5.8 V9 M18.4,6 V9" stroke="#dcdcdc" stroke-width="0.8"/><rect x="20.6" y="1.4" width="2.6" height="2.6" fill="#f0f0f0"/><polyline points="25.5,4.6 27.4,6.5 29.3,4.6" fill="none" stroke="#d8d8d8" stroke-width="0.9" stroke-linecap="round" stroke-linejoin="round"/></svg>
<div style="left:753.5px;top:36px;width:12.2px;height:10.8px;background:#656565;border-radius:3px 0 0 3px;"></div>
<div style="left:765.7px;top:36px;width:19.3px;height:10.8px;background:#3a3a3a;border-radius:0 3px 3px 0;"></div>
<svg style="left:753.5px;top:36px;" width="31.5" height="10.8" viewBox="0 0 31.5 10.8"><circle cx="6.1" cy="5.4" r="3.5" fill="none" stroke="#c8c8c8" stroke-width="0.9"/><circle cx="6.1" cy="5.4" r="1.5" fill="#e8e8e8"/><path d="M14,9 C16.5,9 16.5,2 18.6,2 C20.7,2 20.7,9 23.2,9" fill="none" stroke="#777" stroke-width="0.8"/><polyline points="25.5,4.6 27.4,6.5 29.3,4.6" fill="none" stroke="#777" stroke-width="0.9" stroke-linecap="round" stroke-linejoin="round"/></svg>
<div style="left:795.5px;top:36px;width:19.5px;height:10.8px;background:#2b2b2b;border-radius:3px;"></div>
<svg style="left:795.5px;top:36px;" width="19.5" height="10.8" viewBox="0 0 19.5 10.8"><path d="M1.6,4.2 C3.6,1.2 8.4,1.2 10.4,4.2 C8.4,7 3.6,7 1.6,4.2 Z" fill="#e0e0e0"/><circle cx="6" cy="4.1" r="1.5" fill="#2b2b2b"/><path d="M3.2,6.4 L3.2,10 L4.4,8.8 L5.6,10.4 L6.3,9.8 L5.2,8.4 L6.8,8.2 Z" fill="#e0e0e0"/><polyline points="13.9,4.6 15.8,6.5 17.7,4.6" fill="none" stroke="#d8d8d8" stroke-width="0.9" stroke-linecap="round" stroke-linejoin="round"/></svg>
<div style="left:817.8px;top:35.7px;width:11.2px;height:11.2px;background:#4772b3;border-radius:3px 0 0 3px;"></div>
<svg style="left:817.8px;top:35.7px;" width="11.2" height="11.2" viewBox="0 0 11.2 11.2"><path d="M1.6,9.6 C3,5.4 6,3 9.8,1.8 M1.8,2.4 C4.6,3.4 7.2,5.6 8.6,9.6" fill="none" stroke="#ffffff" stroke-width="0.9"/><path d="M7.4,1.4 L10.2,1.4 L9.6,4" fill="none" stroke="#ffffff" stroke-width="0.9"/></svg>
<div style="left:718.3px;top:48.5px;width:110.7px;height:15.8px;background:#383838;border-radius:0 0 0 4px;"></div>
<svg style="left:722px;top:51px;" width="14" height="12" viewBox="0 0 14 12"><path d="M6,1.2 V10.8" stroke="#cfcfcf" stroke-width="0.7" stroke-dasharray="1.2 0.8"/><path d="M4.6,2.2 C2.6,1.6 1.4,3 2.6,4.6 C3.4,5.6 3.4,6.4 2.6,7.4 C1.4,9 2.6,10.4 4.6,9.8 M7.4,2.2 C9.4,1.6 10.6,3 9.4,4.6 C8.6,5.6 8.6,6.4 9.4,7.4 C10.6,9 9.4,10.4 7.4,9.8" fill="none" stroke="#cfcfcf" stroke-width="0.8"/></svg>
<div style="left:735.7px;top:52px;width:9.9px;height:10.5px;background:#585858;border-radius:3px 0 0 3px;"></div>
<span class="t" style="left:738.17px;top:52px;color:#e8e8e8;font-size:7.6px;">X</span>
<div style="left:745.9px;top:52px;width:9.9px;height:10.5px;background:#585858;"></div>
<span class="t" style="left:748.37px;top:52px;color:#e8e8e8;font-size:7.6px;">Y</span>
<div style="left:756.1px;top:52px;width:9.9px;height:10.5px;background:#585858;border-radius:0 3px 3px 0;"></div>
<span class="t" style="left:758.78px;top:52px;color:#e8e8e8;font-size:7.6px;">Z</span>
<div style="left:769.5px;top:52px;width:11.5px;height:10.5px;background:#585858;border-radius:3px;"></div>
<svg style="left:769.5px;top:52px;" width="11.5" height="10.5" viewBox="0 0 11.5 10.5"><path d="M2.6,7.6 C3.4,4.4 5.4,3 8.6,2.8" fill="none" stroke="#bcbcbc" stroke-width="0.8" stroke-dasharray="1.2 1"/><circle cx="2.6" cy="8" r="1.3" fill="none" stroke="#d0d0d0" stroke-width="0.7"/><circle cx="5.8" cy="8" r="1.3" fill="none" stroke="#d0d0d0" stroke-width="0.7"/><rect x="7.6" y="1.4" width="2.4" height="2.4" fill="#e8e8e8"/></svg>
<div style="left:785.5px;top:51.8px;width:39px;height:10.5px;background:#2b2b2b;border-radius:3px;"></div>
<span class="t" style="left:790.80px;top:52px;color:#e4e4e4;font-size:7.9px;letter-spacing:-0.361px;">Options</span>
<svg style="left:815px;top:51.8px;" width="10" height="10.5" viewBox="0 0 10 10.5"><polyline points="3.3,4.5 5.2,6.4 7.1,4.5" fill="none" stroke="#d8d8d8" stroke-width="0.9" stroke-linecap="round" stroke-linejoin="round"/></svg>
<div style="left:299.3px;top:70px;width:24.4px;height:20.6px;background:#4772b3;border-radius:3px 3px 0 0;"></div>
<div style="left:299.3px;top:92.2px;width:24.4px;height:20.6px;background:#2c2c2c;border-radius:0 0 3px 3px;"></div>
<div style="left:299.3px;top:116.9px;width:24.4px;height:20.6px;background:#2c2c2c;border-radius:3px 3px 0 0;"></div>
<div style="left:299.3px;top:138.9px;width:24.4px;height:20.6px;background:#2c2c2c;border-radius:0 0 0 0;"></div>
<div style="left:299.3px;top:160.9px;width:24.4px;height:20.6px;background:#2c2c2c;border-radius:0 0 0 0;"></div>
<div style="left:299.3px;top:182.9px;width:24.4px;height:20.6px;background:#2c2c2c;border-radius:0 0 3px 3px;"></div>
<div style="left:299.3px;top:207.3px;width:24.4px;height:20.6px;background:#2c2c2c;border-radius:3px 3px 0 0;"></div>
<div style="left:299.3px;top:229.4px;width:24.4px;height:20.6px;background:#2c2c2c;border-radius:0 0 3px 3px;"></div>
<div style="left:299.3px;top:254.2px;width:24.4px;height:20.6px;background:#2c2c2c;border-radius:3px 3px 3px 3px;"></div>
<div style="left:299.3px;top:278.6px;width:24.4px;height:20.6px;background:#2c2c2c;border-radius:3px 3px 0 0;"></div>
<div style="left:299.3px;top:300.64px;width:24.4px;height:20.6px;background:#2c2c2c;border-radius:0 0 0 0;"></div>
<div style="left:299.3px;top:322.68px;width:24.4px;height:20.6px;background:#2c2c2c;border-radius:0 0 0 0;"></div>
<div style="left:299.3px;top:344.72px;width:24.4px;height:20.6px;background:#2c2c2c;border-radius:0 0 0 0;"></div>
<div style="left:299.3px;top:366.76px;width:24.4px;height:20.6px;background:#2c2c2c;border-radius:0 0 0 0;"></div>
<div style="left:299.3px;top:388.8px;width:24.4px;height:20.6px;background:#2c2c2c;border-radius:0 0 0 0;"></div>
<div style="left:299.3px;top:410.84px;width:24.4px;height:20.6px;background:#2c2c2c;border-radius:0 0 0 0;"></div>
<div style="left:299.3px;top:432.88px;width:24.4px;height:20.6px;background:#2c2c2c;border-radius:0 0 0 0;"></div>
<div style="left:299.3px;top:454.92px;width:24.4px;height:19.58px;background:#2c2c2c;border-radius:0 0 3px 3px;"></div>
<svg style="left:299.3px;top:66px;" width="24.4" height="408.5" viewBox="0 0 24.4 408.5"><g transform="translate(12.0,14.3) scale(1.22) translate(-12.0,-14.3)"><rect x="6.4" y="8.9" width="11.2" height="10.8" rx="1" fill="none" stroke="#f2a53a" stroke-width="1" stroke-dasharray="2 1.1"/><path d="M10.0,10.7 L15.6,14.9 L12.8,15.3 L11.2,17.7 Z" fill="#ffffff"/></g><path d="M23.2,22.0 v1.8 h-1.8 Z" fill="#b0b0b0"/><g transform="translate(12.0,36.5) scale(1.36) translate(-12.0,-36.5)"><circle cx="12.0" cy="36.5" r="5.3" fill="none" stroke="#f0f0f0" stroke-width="0.8"/><circle cx="12.0" cy="36.5" r="5.3" fill="none" stroke="#d04040" stroke-width="0.8" stroke-dasharray="2.08 2.08"/><path d="M8.6,36.5 H11.0 M13.0,36.5 H15.4 M12.0,33.1 V35.5 M12.0,37.5 V39.9" stroke="#9a9a9a" stroke-width="0.5"/></g><g transform="translate(12.0,61.2) scale(1.15) translate(-12.0,-61.2)"><path d="M7.0,61.2 H10.2 M13.8,61.2 H17.0 M12.0,56.2 V59.4 M12.0,63.0 V66.2" stroke="#e2e2e2" stroke-width="0.9"/><path d="M12.0,54.4 l2.2,2.6 h-4.4 Z M12.0,68.0 l2.2,-2.6 h-4.4 Z M5.2,61.2 l2.6,-2.2 v4.4 Z M18.8,61.2 l-2.6,-2.2 v4.4 Z" fill="#e2e2e2"/></g><g transform="translate(12.0,83.2) scale(1.2) translate(-12.0,-83.2)"><path d="M6.8,82.6 A5.2,5.2 0 0 1 15.8,79.6 M17.2,83.8 A5.2,5.2 0 0 1 8.2,86.8" fill="none" stroke="#e2e2e2" stroke-width="1"/><path d="M17.2,80.8 l1.8,3.2 h-3.8 Z M6.8,85.6 l-1.8,-3.2 h3.8 Z" fill="#e2e2e2"/><circle cx="12.0" cy="83.2" r="1.6" fill="#e2e2e2"/></g><g transform="translate(12.0,105.2) scale(1.2) translate(-12.0,-105.2)"><rect x="7.2" y="100.4" width="9.6" height="9.6" fill="none" stroke="#a4a4a4" stroke-width="0.7"/><path d="M12.6,104.6 L15.0,102.2" stroke="#e2e2e2" stroke-width="0.9"/><path d="M15.8,101.4 v2.8 l-2.8,-2.8 Z" fill="#e2e2e2"/><rect x="7.2" y="105.0" width="5" height="5" fill="#e2e2e2"/></g><path d="M23.2,112.9 v1.8 h-1.8 Z" fill="#b0b0b0"/><g transform="translate(12.0,127.2) scale(1.2) translate(-12.0,-127.2)"><circle cx="12.0" cy="127.2" r="5.4" fill="none" stroke="#e2e2e2" stroke-width="0.9" stroke-dasharray="5.2 3.28" stroke-dashoffset="-1.6"/><rect x="9.8" y="125.0" width="4.4" height="4.4" fill="#e2e2e2"/><path d="M12.0,121.0 l1.6,1.8 h-3.2 Z M12.0,133.4 l1.6,-1.8 h-3.2 Z M5.8,127.2 l1.8,-1.6 v3.2 Z M18.2,127.2 l-1.8,-1.6 v3.2 Z" fill="#e2e2e2"/></g><g transform="translate(12.0,151.6) scale(1.2) translate(-12.0,-151.6)"><path d="M7.6,153.2 L14.6,146.2 L16.4,148.0 L9.4,154.8 L6.8,155.6 Z" fill="#e2e2e2"/><path d="M7.6,156.2 C11.0,158.6 13.0,152.6 18.4,155.0" fill="none" stroke="#8fdcb0" stroke-width="1"/></g><path d="M23.2,159.3 v1.8 h-1.8 Z" fill="#b0b0b0"/><g transform="translate(12.0,173.7) scale(1.15) translate(-12.0,-173.7)"><path d="M8.4,179.1 A7.4,7.4 0 0 1 16.4,179.1 Z" fill="#8fdcb0" transform="translate(0,0)"/><path d="M9.6,178.7 V172.3 A6.6,6.6 0 0 1 16.2,178.7 Z" fill="#8fdcb0"/><path d="M7.4,167.3 h2 V178.1 H17.6 v2 H7.4 Z" fill="#e2e2e2"/></g><g transform="translate(12.0,198.5) scale(1.22) translate(-12.0,-198.5)"><path d="M7.6,197.1 h7.2 v7.2 h-7.2 Z M7.6,197.1 l3,-2.8 h7.2 l-3,2.8 M17.8,194.3 v7.2 l-3,2.8" fill="none" stroke="#8fdcb0" stroke-width="0.9" stroke-linejoin="round"/><path d="M5.2,193.1 h4 M7.2,191.1 v4" stroke="#8fdcb0" stroke-width="1"/></g><path d="M23.2,206.2 v1.8 h-1.8 Z" fill="#b0b0b0"/><g transform="translate(12.0,222.9) scale(1.22) translate(-12.0,-222.9)"><path d="M6.8,222.5 h7.2 v7.2 h-7.2 Z M6.8,222.5 l3,-2.8 h7.2 l-3,2.8 M17.0,219.7 v7.2 l-3,2.8" fill="none" stroke="#e2e2e2" stroke-width="0.8" stroke-linejoin="round"/><path d="M6.6,221.9 V218.5 Q6.6,216.9 8.2,216.9 H15.8 Q17.4,216.9 17.4,218.5 V220.3 L14.2,222.3 H6.6 Z" fill="#8fdcb0"/></g><path d="M23.2,230.6 v1.8 h-1.8 Z" fill="#b0b0b0"/><g transform="translate(12.0,244.9) scale(1.22) translate(-12.0,-244.9)"><path d="M6.8,243.3 h7.2 v7.2 h-7.2 Z M6.8,243.3 l3,-2.8 h7.2 l-3,2.8 M17.0,240.5 v7.2 l-3,2.8" fill="none" stroke="#e2e2e2" stroke-width="0.8" stroke-linejoin="round"/><rect x="6.8" y="243.3" width="7.2" height="7.2" fill="#8fdcb0"/><rect x="8.8" y="245.3" width="3.2" height="3.2" fill="#2c2c2c"/><path d="M6.8,243.3 l2,2 M14.0,243.3 l-2,2 M6.8,250.5 l2,-2 M14.0,250.5 l-2,-2" stroke="#2c2c2c" stroke-width="0.5"/></g><g transform="translate(12.0,267.0) scale(1.22) translate(-12.0,-267.0)"><path d="M6.8,266.8 h7.2 v7.2 h-7.2 Z M6.8,266.8 l3,-2.8 h7.2 l-3,2.8 M17.0,264.0 v7.2 l-3,2.8" fill="none" stroke="#e2e2e2" stroke-width="0.8" stroke-linejoin="round"/><path d="M6.8,266.8 L10.8,262.2 H15.0 L17.4,264.4 L14.4,266.8 Z" fill="#8fdcb0"/></g><path d="M23.2,274.7 v1.8 h-1.8 Z" fill="#b0b0b0"/><g transform="translate(12.0,289.0) scale(1.22) translate(-12.0,-289.0)"><path d="M6.8,287.4 h7.2 v7.2 h-7.2 Z M6.8,287.4 l3,-2.8 h7.2 l-3,2.8 M17.0,284.6 v7.2 l-3,2.8" fill="none" stroke="#e2e2e2" stroke-width="0.8" stroke-linejoin="round"/><path d="M10.6,294.6 V287.4 l3,-2.8" fill="none" stroke="#8fdcb0" stroke-width="0.9"/></g><path d="M23.2,296.7 v1.8 h-1.8 Z" fill="#b0b0b0"/><g transform="translate(12.0,311.1) scale(1.22) translate(-12.0,-311.1)"><path d="M6.8,309.5 h7.2 v7.2 h-7.2 Z M6.8,309.5 l3,-2.8 h7.2 l-3,2.8 M17.0,306.7 v7.2 l-3,2.8" fill="none" stroke="#e2e2e2" stroke-width="0.8" stroke-linejoin="round"/><path d="M8.6,309.5 L12.6,316.7 M8.6,309.5 L13.0,307.1" fill="none" stroke="#8fdcb0" stroke-width="0.9"/><circle cx="13.2" cy="306.9" r="0.9" fill="#8fdcb0"/></g><path d="M23.2,318.8 v1.8 h-1.8 Z" fill="#b0b0b0"/><g transform="translate(12.0,333.1) scale(1.22) translate(-12.0,-333.1)"><path d="M7.0,338.3 L7.4,332.5 L10.6,327.9 L16.6,331.1 L17.2,338.3 Z" fill="#8fdcb0"/><rect x="6.2" y="337.5" width="1.6" height="1.6" fill="#f4f4f4"/><rect x="6.6" y="331.7" width="1.6" height="1.6" fill="#f4f4f4"/><rect x="9.8" y="327.1" width="1.6" height="1.6" fill="#f4f4f4"/><rect x="15.8" y="330.3" width="1.6" height="1.6" fill="#f4f4f4"/><rect x="16.4" y="337.5" width="1.6" height="1.6" fill="#f4f4f4"/></g><g transform="translate(12.0,355.1) scale(1.22) translate(-12.0,-355.1)"><path d="M11.6,355.7 L11.6,349.7 A6,6 0 1 0 17.2,357.7 Z" fill="#8fdcb0"/><path d="M13.0,354.3 L13.0,349.5 L14.4,349.9 L14.4,352.7 L17.0,351.7 A6,6 0 0 1 17.8,356.1 Z" fill="#8fdcb0"/><path d="M11.6,355.7 L6.4,352.7 M11.6,355.7 L5.8,357.5 M11.6,355.7 L8.4,360.9 M11.6,355.7 L12.8,361.7 M11.6,355.7 L8.6,350.5" stroke="#3c7a5a" stroke-width="0.4"/></g><g transform="translate(12.0,377.2) scale(1.22) translate(-12.0,-377.2)"><rect x="7.4" y="373.0" width="9.2" height="9" rx="3.6" fill="#d6b8e6"/><path d="M7.4,377.6 H16.6 M11.8,373.0 V382.0 M7.8,375.2 Q12.0,376.0 16.2,375.2 M7.8,380.0 Q12.0,379.2 16.2,380.0 M9.6,373.2 Q8.8,377.6 9.6,381.8 M14.2,373.2 Q15.0,377.6 14.2,381.8" fill="none" stroke="#8a7496" stroke-width="0.4"/></g><path d="M23.2,384.9 v1.8 h-1.8 Z" fill="#b0b0b0"/><g transform="translate(12.0,399.2) scale(1.22) translate(-12.0,-399.2)"><path d="M7.4,398.6 h7.2 v7.2 h-7.2 Z M7.4,398.6 l3,-2.8 h7.2 l-3,2.8 M17.6,395.8 v7.2 l-3,2.8" fill="none" stroke="#e2e2e2" stroke-width="0.8" stroke-linejoin="round"/><path d="M7.4,398.6 v7.2 M9.0,398.6 v7.2" stroke="#d6b8e6" stroke-width="0.9"/><path d="M5.4,392.2 l0.8,1.4 l1.4,0.4 l-1.4,0.6 l-0.8,1.4 l-0.6,-1.4 l-1.4,-0.6 l1.4,-0.4 Z" fill="#d6b8e6"/></g></svg>
<span class="t" style="left:335.00px;top:70px;color:#f0f0f0;font-size:7.9px;letter-spacing:-0.228px;text-shadow:0 0 1.5px #000;">User Perspective</span>
<span class="t" style="left:335.00px;top:82px;color:#f0f0f0;font-size:7.9px;letter-spacing:-0.155px;text-shadow:0 0 1.5px #000;">(1) Cube</span>
<svg style="left:770px;top:60px;" width="60" height="70" viewBox="0 0 60 70"><circle cx="10.7" cy="34.6" r="4.4" fill="#5a3a3e" stroke="#b0384a" stroke-width="0.9"/><circle cx="27.9" cy="56.0" r="4.4" fill="#3c5880" stroke="#3c78c8" stroke-width="0.9"/><line x1="27.9" y1="36.2" x2="27.9" y2="21.0" stroke="#3a84d8" stroke-width="1.1"/><line x1="27.9" y1="36.2" x2="38.6" y2="32.8" stroke="#7aa028" stroke-width="1.1"/><circle cx="38.6" cy="32.8" r="4" fill="#6a9426"/><line x1="27.9" y1="36.2" x2="44.3" y2="38.3" stroke="#e83850" stroke-width="1.1"/><circle cx="16.2" cy="39.6" r="4.8" fill="#6e9430" stroke="#94c830" stroke-width="1"/><circle cx="27.9" cy="16.7" r="4.9" fill="#3a86e0"/><text x="27.9" y="18.9" font-size="6.4" font-weight="bold" text-anchor="middle" fill="#10243c" font-family="Liberation Sans, sans-serif">Z</text><text x="38.0" y="34.4" font-size="6.4" font-weight="bold" text-anchor="middle" fill="#2a3c10" font-family="Liberation Sans, sans-serif">Y</text><circle cx="44.3" cy="38.3" r="4.9" fill="#f03a56"/><text x="44.3" y="40.5" font-size="6.4" font-weight="bold" text-anchor="middle" fill="#3c0c14" font-family="Liberation Sans, sans-serif">X</text></svg>
<div style="left:807.3px;top:122.1px;width:16px;height:16px;background:#2b2b2b;border-radius:8px;"></div>
<div style="left:807.3px;top:140.8px;width:16px;height:16px;background:#2b2b2b;border-radius:8px;"></div>
<div style="left:807.3px;top:159.5px;width:16px;height:16px;background:#2b2b2b;border-radius:8px;"></div>
<div style="left:807.3px;top:178.2px;width:16px;height:16px;background:#2b2b2b;border-radius:8px;"></div>
<svg style="left:807.8px;top:122.8px;overflow:visible;" width="15" height="72" viewBox="0 0 15 72"><g transform="translate(7.5,7.3) scale(1.12) translate(-7.5,-7.3)"><circle cx="8.4" cy="6.2" r="3.2" fill="#e8e8e8"/><path d="M6,8.6 L3.2,11.6" stroke="#e8e8e8" stroke-width="1.4" stroke-linecap="round"/><path d="M6.8,6.2 h3.2 M8.4,4.6 v3.2" stroke="#2a2a2a" stroke-width="0.7"/></g><g transform="translate(7.5,26.0) scale(1.12) translate(-7.5,-26.0)"><path d="M4.7,27.2 L4.5,22.6 M6.7,26.6 L6.5,21.0 M8.7,26.6 L8.9,21.2 M10.7,27.4 L11.1,23.0" stroke="#e8e8e8" stroke-width="1.5" stroke-linecap="round" fill="none"/><path d="M4.0,26.6 H11.4 V28.6 C11.4,31.4 9.3,32.0 7.7,32.0 C5.7,32.0 4.7,31.0 4.0,29.4 Z" fill="#e8e8e8"/><path d="M4.5,29.6 L2.3,27.2" stroke="#e8e8e8" stroke-width="1.5" stroke-linecap="round"/></g><g transform="translate(7.5,44.7) scale(1.12) translate(-7.5,-44.7)"><circle cx="5.4" cy="41.8" r="1.7" fill="none" stroke="#e8e8e8" stroke-width="0.9"/><circle cx="9.2" cy="41.8" r="1.7" fill="none" stroke="#e8e8e8" stroke-width="0.9"/><rect x="3.4" y="43.8" width="6.8" height="4" rx="0.8" fill="#e8e8e8"/><path d="M10.4,45.8 l2.2,-1.6 v3.2 Z" fill="#e8e8e8"/></g><g transform="translate(7.5,63.4) scale(1.12) translate(-7.5,-63.4)"><path d="M5,59.7 H10 L11.6,66.5 H3.4 Z" fill="#e8e8e8"/><path d="M6.6,59.7 L5.9,66.5 M8.4,59.7 L9.1,66.5 M4.5,61.9 H10.5 M4,64.1 H11" stroke="#2a2a2a" stroke-width="0.6"/></g></svg>
<div style="left:824.4px;top:72.4px;width:4.6px;height:11.6px;background:#2e2e2e;border-radius:3px 0 0 3px;"></div>
<svg style="left:822px;top:73px;" width="8" height="10" viewBox="0 0 8 10"><polyline points="5.9,3.0 3.7,5.2 5.9,7.4" fill="none" stroke="#b8b8b8" stroke-width="0.8" stroke-linecap="round" stroke-linejoin="round"/></svg>
<svg style="left:632px;top:230px;" width="27" height="27" viewBox="0 0 27 27"><path d="M1.500000000000023,13.5 H9.500000000000023 M16.700000000000024,13.5 H24.700000000000024 M13.100000000000023,1.9000000000000004 V9.9 M13.100000000000023,17.1 V25.1" stroke="#1c1c1c" stroke-width="0.7"/><circle cx="13.100000000000023" cy="13.5" r="5.6" fill="none" stroke="#f4f4f4" stroke-width="1"/><circle cx="13.100000000000023" cy="13.5" r="5.6" fill="none" stroke="#e03c3c" stroke-width="1" stroke-dasharray="2.2 2.2"/><circle cx="13.100000000000023" cy="13.5" r="0.9" fill="#ff9a20"/></svg>
<div style="left:832px;top:33px;width:173px;height:120.6px;background:#303030;border-radius:3px 0 0 3px;"></div>
<div style="left:832px;top:49.2px;width:16.4px;height:104.4px;background:#1c1c1c;border-radius:0 0 0 3px;"></div>
<div style="left:832px;top:33px;width:173px;height:16.2px;background:#303030;border-radius:3px 0 0 0;"></div>
<div style="left:836px;top:35.7px;width:18px;height:10.8px;background:#2b2b2b;border-radius:3px;"></div>
<svg style="left:836px;top:35.7px;" width="18" height="10.8" viewBox="0 0 18 10.8"><rect x="2.6" y="1.2" width="8.6" height="3.8" rx="1.9" fill="#ececec"/><circle cx="9.3" cy="3.1" r="1.2" fill="#2b2b2b"/><rect x="2.6" y="5.8" width="8.6" height="3.8" rx="1.9" fill="#ececec"/><circle cx="4.5" cy="7.7" r="1.2" fill="#2b2b2b"/><polyline points="13.0,4.7 14.8,6.5 16.6,4.7" fill="none" stroke="#d8d8d8" stroke-width="0.9" stroke-linecap="round" stroke-linejoin="round"/></svg>
<div style="left:879.1px;top:36px;width:72.7px;height:10.5px;background:#1d1d1d;border-radius:3px;"></div>
<svg style="left:879.1px;top:36px;" width="16" height="10.5" viewBox="0 0 16 10.5"><circle cx="7.6" cy="4.2" r="2.6" fill="none" stroke="#e0e0e0" stroke-width="1"/><path d="M5.8,6.2 L2.8,9.4" stroke="#e0e0e0" stroke-width="1.1" stroke-linecap="round"/></svg>
<span class="t" style="left:895.00px;top:36px;color:#6a6a6a;font-size:7.9px;letter-spacing:-0.339px;">Search</span>
<div style="left:988.9px;top:36px;width:10.2px;height:10.5px;background:#282828;border-radius:3px;"></div>
<svg style="left:988.9px;top:36px;" width="10.2" height="10.5" viewBox="0 0 10.2 10.5"><polyline points="3.2,4.6 5.1,6.5 7.0,4.6" fill="none" stroke="#e0e0e0" stroke-width="1.0" stroke-linecap="round" stroke-linejoin="round"/></svg>
<svg style="left:832px;top:49.2px;" width="16.4" height="104.4" viewBox="0 0 16.4 104.4"><rect x="3.6" y="-7.3" width="8" height="6.6" rx="0.8" fill="none" stroke="#c6c6c6" stroke-width="1"/><rect x="5.2" y="-9.3" width="3.6" height="2" fill="#c6c6c6"/><path d="M11.8,-5.7 h1.8 v3.6 h-1.8" fill="#c6c6c6"/><rect x="3.4" y="7.3" width="9.6" height="3.4" rx="0.8" fill="#c6c6c6"/><path d="M4.6,11.3 h7.2 v5 h-7.2 Z" fill="none" stroke="#c6c6c6" stroke-width="1"/><path d="M6.6,15.1 l1.6,-2 l1.6,2 Z" fill="#c6c6c6"/><rect x="3.4" y="10.7" width="9.6" height="1.6" fill="#c6c6c6"/><path d="M5.8,25.0 h7 v7" fill="none" stroke="#9a9a9a" stroke-width="1"/><path d="M4.6,26.6 h6.8 v6.8" fill="none" stroke="#b8b8b8" stroke-width="1"/><rect x="3.2" y="28.2" width="6.8" height="6" rx="0.6" fill="#c6c6c6"/><path d="M4.0,33.2 l2,-2.6 l1.4,1.6 l1,-1 l1.4,2 Z" fill="#1d1d1d"/><path d="M6.0,42.3 l2.8,6.6 a2.8,2.8 0 0 1 -5.6,0 Z" fill="#bdbdbd"/><circle cx="10.8" cy="49.3" r="2.6" fill="none" stroke="#c6c6c6" stroke-width="1"/><circle cx="11.6" cy="43.7" r="1.3" fill="#c6c6c6"/><circle cx="8.2" cy="64.8" r="4.6" fill="none" stroke="#e0525e" stroke-width="1"/><path d="M3.8,63.8 C6.2,62.4 7.6,65.4 6.2,67.4 M8.8,60.4 C7.6,62.8 10.2,63.8 12.4,62.8 M9.2,69.2 C8.6,66.8 10.8,65.8 12.6,66.2" fill="none" stroke="#e0525e" stroke-width="0.9"/><rect x="3.4" y="82.7" width="9.6" height="2.6" rx="0.5" fill="none" stroke="#c6c6c6" stroke-width="1"/><path d="M4.2,85.5 v6 h8 v-6" fill="none" stroke="#c6c6c6" stroke-width="1"/><rect x="6.6" y="87.3" width="3.2" height="1.6" fill="#c6c6c6"/><rect x="5.4" y="104.0" width="5.6" height="5.6" fill="#e8923c"/><path d="M3.6,104.6 v-2.4 h2.4 M10.4,102.2 h2.4 v2.4 M12.8,109.0 v2.4 h-2.4 M6.0,111.4 h-2.4 v-2.4" fill="none" stroke="#e8923c" stroke-width="0.9"/></svg>
<div style="left:853.1px;top:49.2px;width:146px;height:2.7px;background:#3b3b3b;border-radius:0 0 3px 3px;"></div>
<div style="left:853.1px;top:54.2px;width:146px;height:73.7px;background:#3b3b3b;border-radius:3px;"></div>
<svg style="left:853.1px;top:54.2px;" width="146" height="16" viewBox="0 0 146 16"><polyline points="5.3,7.0 7.7,9.4 10.1,7.0" fill="none" stroke="#d8d8d8" stroke-width="1" stroke-linecap="round" stroke-linejoin="round"/><rect x="133.90" y="5.90" width="1.25" height="1.05" fill="#777777"/><rect x="133.90" y="8.80" width="1.25" height="1.05" fill="#777777"/><rect x="135.95" y="5.90" width="1.25" height="1.05" fill="#777777"/><rect x="135.95" y="8.80" width="1.25" height="1.05" fill="#777777"/><rect x="138.00" y="5.90" width="1.25" height="1.05" fill="#777777"/><rect x="138.00" y="8.80" width="1.25" height="1.05" fill="#777777"/><rect x="140.05" y="5.90" width="1.25" height="1.05" fill="#777777"/><rect x="140.05" y="8.80" width="1.25" height="1.05" fill="#777777"/></svg>
<span class="t" style="left:866.60px;top:57px;color:#e2e2e2;font-size:7.9px;letter-spacing:-0.207px;">Attributes</span>
<div style="left:858.5px;top:75.5px;width:117.9px;height:47px;background:#282828;border-radius:3px;"></div>
<div style="left:860.8px;top:77.3px;width:113.2px;height:11.6px;background:#4772b3;border-radius:2.5px;"></div>
<span class="t" style="left:863.50px;top:78px;color:#ffffff;font-size:7.9px;letter-spacing:-0.117px;">Bevel Top</span>
<span class="t" style="left:920.80px;top:78px;color:#a9bbd8;font-size:7.9px;letter-spacing:-0.104px;">Edge - Boole...</span>
<span class="t" style="left:863.50px;top:91px;color:#e2e2e2;font-size:7.9px;letter-spacing:-0.293px;">Bevel Sides</span>
<span class="t" style="left:920.80px;top:91px;color:#7e7e7e;font-size:7.9px;letter-spacing:-0.104px;">Edge - Boole...</span>
<span class="t" style="left:863.50px;top:103px;color:#e2e2e2;font-size:7.9px;letter-spacing:-0.429px;">UVMap</span>
<span class="t" style="left:922.00px;top:103px;color:#7e7e7e;font-size:7.9px;letter-spacing:-0.212px;">Face Corner ...</span>
<svg style="left:858.5px;top:113px;" width="118" height="9" viewBox="0 0 118 9"><path d="M6.4,2.8 L9.6,4.6 L6.4,6.4 Z" fill="#d0d0d0"/><rect x="60.80" y="2.30" width="1.25" height="1.05" fill="#6c6c6c"/><rect x="60.80" y="5.20" width="1.25" height="1.05" fill="#6c6c6c"/><rect x="62.85" y="2.30" width="1.25" height="1.05" fill="#6c6c6c"/><rect x="62.85" y="5.20" width="1.25" height="1.05" fill="#6c6c6c"/><rect x="64.90" y="2.30" width="1.25" height="1.05" fill="#6c6c6c"/><rect x="64.90" y="5.20" width="1.25" height="1.05" fill="#6c6c6c"/><rect x="66.95" y="2.30" width="1.25" height="1.05" fill="#6c6c6c"/><rect x="66.95" y="5.20" width="1.25" height="1.05" fill="#6c6c6c"/></svg>
<div style="left:982.6px;top:75.5px;width:11.1px;height:11.2px;background:#545454;border-radius:3px 3px 0 0;"></div>
<div style="left:982.6px;top:87.2px;width:11.1px;height:11.2px;background:#545454;border-radius:0 0 3px 3px;"></div>
<svg style="left:982.6px;top:75.5px;" width="11.1" height="23" viewBox="0 0 11.1 23"><path d="M2.8,5.6 H8.4 M5.6,2.8 V8.4 M2.8,17.4 H8.4" stroke="#e4e4e4" stroke-width="1"/></svg>
<div style="left:982.6px;top:103.8px;width:11.1px;height:11.1px;background:#282828;border-radius:3px;"></div>
<svg style="left:982.6px;top:103.8px;" width="11.1" height="11.1" viewBox="0 0 11.1 11.1"><polyline points="3.4,4.8 5.6,7.0 7.8,4.8" fill="none" stroke="#e0e0e0" stroke-width="1" stroke-linecap="round" stroke-linejoin="round"/></svg>
<div style="left:853.1px;top:129.7px;width:146px;height:14.9px;background:#3b3b3b;border-radius:3px;"></div>
<svg style="left:853.1px;top:129.7px;" width="146" height="14.9" viewBox="0 0 146 14.9"><polyline points="6.5,5.4 8.9,7.8 6.5,10.2" fill="none" stroke="#d8d8d8" stroke-width="1" stroke-linecap="round" stroke-linejoin="round"/><rect x="133.90" y="5.70" width="1.25" height="1.05" fill="#777777"/><rect x="133.90" y="8.60" width="1.25" height="1.05" fill="#777777"/><rect x="135.95" y="5.70" width="1.25" height="1.05" fill="#777777"/><rect x="135.95" y="8.60" width="1.25" height="1.05" fill="#777777"/><rect x="138.00" y="5.70" width="1.25" height="1.05" fill="#777777"/><rect x="138.00" y="8.60" width="1.25" height="1.05" fill="#777777"/><rect x="140.05" y="5.70" width="1.25" height="1.05" fill="#777777"/><rect x="140.05" y="8.60" width="1.25" height="1.05" fill="#777777"/></svg>
<span class="t" style="left:866.60px;top:133px;color:#e2e2e2;font-size:7.9px;letter-spacing:-0.239px;">Texture Space</span>
<div style="left:853.1px;top:146.4px;width:146px;height:7.2px;background:#3b3b3b;border-radius:3px 3px 0 0;"></div>
<div style="left:853.1px;top:146.4px;width:146px;height:7.2px;overflow:hidden;"><span class="t" style="left:13.5px;top:1.6px;color:#e2e2e2;font-size:7.9px;">Remesh</span><svg style="left:0;top:0" width="146" height="16"><polyline points="6.5,5.2 8.9,7.6 6.5,10.0" fill="none" stroke="#d8d8d8" stroke-width="1" stroke-linecap="round" stroke-linejoin="round"/><rect x="133.90" y="5.50" width="1.25" height="1.05" fill="#777777"/><rect x="133.90" y="8.40" width="1.25" height="1.05" fill="#777777"/><rect x="135.95" y="5.50" width="1.25" height="1.05" fill="#777777"/><rect x="135.95" y="8.40" width="1.25" height="1.05" fill="#777777"/><rect x="138.00" y="5.50" width="1.25" height="1.05" fill="#777777"/><rect x="138.00" y="8.40" width="1.25" height="1.05" fill="#777777"/><rect x="140.05" y="5.50" width="1.25" height="1.05" fill="#777777"/><rect x="140.05" y="8.40" width="1.25" height="1.05" fill="#777777"/></svg></div>
<div style="left:1001.6px;top:93px;width:2.2px;height:58px;background:#4f4f4f;border-radius:1px;"></div>
<div style="left:832px;top:155.7px;width:173px;height:379.3px;background:#303030;border-radius:3px 0 0 3px;"></div>
<div style="left:832px;top:170.3px;width:16.4px;height:364.7px;background:#1c1c1c;border-radius:0 0 0 3px;"></div>
<div style="left:832px;top:154.9px;width:173px;height:16.2px;background:#303030;border-radius:3px 0 0 0;"></div>
<div style="left:836px;top:157.6px;width:18px;height:10.8px;background:#2b2b2b;border-radius:3px;"></div>
<svg style="left:836px;top:157.6px;" width="18" height="10.8" viewBox="0 0 18 10.8"><rect x="2.6" y="1.2" width="8.6" height="3.8" rx="1.9" fill="#ececec"/><circle cx="9.3" cy="3.1" r="1.2" fill="#2b2b2b"/><rect x="2.6" y="5.8" width="8.6" height="3.8" rx="1.9" fill="#ececec"/><circle cx="4.5" cy="7.7" r="1.2" fill="#2b2b2b"/><polyline points="13.0,4.7 14.8,6.5 16.6,4.7" fill="none" stroke="#d8d8d8" stroke-width="0.9" stroke-linecap="round" stroke-linejoin="round"/></svg>
<div style="left:879.1px;top:157.9px;width:72.7px;height:10.5px;background:#1d1d1d;border-radius:3px;"></div>
<svg style="left:879.1px;top:157.9px;" width="16" height="10.5" viewBox="0 0 16 10.5"><circle cx="7.6" cy="4.2" r="2.6" fill="none" stroke="#e0e0e0" stroke-width="1"/><path d="M5.8,6.2 L2.8,9.4" stroke="#e0e0e0" stroke-width="1.1" stroke-linecap="round"/></svg>
<span class="t" style="left:895.00px;top:158px;color:#6a6a6a;font-size:7.9px;letter-spacing:-0.339px;">Search</span>
<div style="left:988.9px;top:157.9px;width:10.2px;height:10.5px;background:#282828;border-radius:3px;"></div>
<svg style="left:988.9px;top:157.9px;" width="10.2" height="10.5" viewBox="0 0 10.2 10.5"><polyline points="3.2,4.6 5.1,6.5 7.0,4.6" fill="none" stroke="#e0e0e0" stroke-width="1.0" stroke-linecap="round" stroke-linejoin="round"/></svg>
<div style="left:832px;top:329.3px;width:16.4px;height:16.2px;background:#303030;border-radius:3px 0 0 3px;"></div>
<svg style="left:832px;top:170px;" width="16.4" height="270" viewBox="0 0 16.4 270"><path d="M5.0,10.4 v4 M5.0,15.6 v4.4" stroke="#c6c6c6" stroke-width="1.6"/><rect x="3.8" y="14.2" width="2.4" height="3" fill="#c6c6c6"/><path d="M9.0,10.4 v2.6 a1.6,1.6 0 0 0 3.2,0 v-2.6 M10.6,14.4 V20.0" stroke="#c6c6c6" stroke-width="1.3" fill="none"/><rect x="3.4" y="33.8" width="8" height="6.6" rx="0.8" fill="none" stroke="#c6c6c6" stroke-width="1"/><rect x="5.0" y="31.8" width="3.6" height="2" fill="#c6c6c6"/><path d="M11.6,35.4 h1.8 v3.6 h-1.8" fill="#c6c6c6"/><rect x="3.2" y="49.5" width="9.6" height="3.4" rx="0.8" fill="#c6c6c6"/><path d="M4.4,53.5 h7.2 v5 h-7.2 Z" fill="none" stroke="#c6c6c6" stroke-width="1"/><path d="M6.4,57.3 l1.6,-2 l1.6,2 Z" fill="#c6c6c6"/><rect x="3.2" y="52.9" width="9.6" height="1.6" fill="#c6c6c6"/><path d="M5.6,66.7 h7 v7" fill="none" stroke="#9a9a9a" stroke-width="1"/><path d="M4.4,68.3 h6.8 v6.8" fill="none" stroke="#b8b8b8" stroke-width="1"/><rect x="3.0" y="69.9" width="6.8" height="6" rx="0.6" fill="#c6c6c6"/><path d="M3.8,74.9 l2,-2.6 l1.4,1.6 l1,-1 l1.4,2 Z" fill="#1d1d1d"/><path d="M5.8,83.5 l2.8,6.6 a2.8,2.8 0 0 1 -5.6,0 Z" fill="#bdbdbd"/><circle cx="10.6" cy="90.5" r="2.6" fill="none" stroke="#c6c6c6" stroke-width="1"/><circle cx="11.4" cy="84.9" r="1.3" fill="#c6c6c6"/><circle cx="8.0" cy="105.4" r="4.6" fill="none" stroke="#e0525e" stroke-width="1"/><path d="M3.6,104.4 C6.0,103.0 7.4,106.0 6.0,108.0 M8.6,101.0 C7.4,103.4 10.0,104.4 12.2,103.4 M9.0,109.8 C8.4,107.4 10.6,106.4 12.4,106.8" fill="none" stroke="#e0525e" stroke-width="0.9"/><rect x="3.2" y="123.6" width="9.6" height="2.6" rx="0.5" fill="none" stroke="#c6c6c6" stroke-width="1"/><path d="M4.0,126.4 v6 h8 v-6" fill="none" stroke="#c6c6c6" stroke-width="1"/><rect x="6.4" y="128.2" width="3.2" height="1.6" fill="#c6c6c6"/><rect x="5.2" y="147.2" width="5.6" height="5.6" fill="#e8923c"/><path d="M3.4,147.8 v-2.4 h2.4 M10.2,145.4 h2.4 v2.4 M12.6,152.2 v2.4 h-2.4 M5.8,154.6 h-2.4 v-2.4" fill="none" stroke="#e8923c" stroke-width="0.9"/><path d="M3.8,171.8 L8.4,167.0" stroke="#5a9ae8" stroke-width="2" stroke-linecap="round"/><path d="M11.8,163.0 a3,3 0 1 0 1.4,3.6 l-2.2,0.4 l-1,-1.6 Z" fill="#5a9ae8"/><path d="M4.6,181.7 L11.6,184.5 M4.6,181.7 L7.6,189.1 M4.6,181.7 L11.0,188.5" stroke="#4aa0e0" stroke-width="0.8"/><circle cx="4.6" cy="181.7" r="1.5" fill="#4aa0e0"/><circle cx="11.6" cy="184.5" r="1" fill="#4aa0e0"/><circle cx="7.6" cy="189.1" r="1" fill="#4aa0e0"/><circle cx="8.4" cy="202.7" r="1.7" fill="#4aa0e0"/><path d="M11.2,198.9 A4.6,4.6 0 1 0 12.8,203.9" fill="none" stroke="#4aa0e0" stroke-width="1"/><circle cx="11.8" cy="198.5" r="0.9" fill="#4aa0e0"/><ellipse cx="6.6" cy="220.9" rx="3.4" ry="2.6" transform="rotate(-35 6.6 220.9)" fill="none" stroke="#4aa0e0" stroke-width="1.1"/><ellipse cx="9.8" cy="217.7" rx="3.2" ry="2.2" transform="rotate(-35 9.8 217.7)" fill="none" stroke="#6e9ecc" stroke-width="1"/><path d="M4.2,233.5 L11.8,233.5 L8.0,240.9 Z" fill="none" stroke="#20c890" stroke-width="1"/><circle cx="4.2" cy="233.5" r="1.2" fill="#20c890"/><circle cx="11.8" cy="233.5" r="1.2" fill="#20c890"/><circle cx="8.0" cy="240.9" r="1.2" fill="#20c890"/><circle cx="8.0" cy="254.0" r="4.6" fill="#e25a64"/><path d="M8.0,254.0 L8.0,249.4 A4.6,4.6 0 0 1 12.6,254.0 Z M8.0,254.0 L8.0,258.6 A4.6,4.6 0 0 1 3.4,254.0 Z" fill="#1d1d1d" opacity="0.75"/></svg>
<svg style="left:853px;top:176px;" width="150" height="13" viewBox="0 0 150 13"><rect x="3.6" y="3.8" width="5" height="5" rx="0.6" fill="#f0f0f0"/><path d="M1.6,4.6 v-2 a1,1 0 0 1 1,-1 h2 M7.6,1.6 h2 a1,1 0 0 1 1,1 v2 M10.6,8 v2 a1,1 0 0 1 -1,1 h-2 M4.6,11 h-2 a1,1 0 0 1 -1,-1 v-2" fill="none" stroke="#d0d0d0" stroke-width="0.8"/><polyline points="43.5,4.0 45.8,6.3 43.5,8.6" fill="none" stroke="#d8d8d8" stroke-width="1" stroke-linecap="round" stroke-linejoin="round"/><path d="M53.8,10.8 V7.0 Q54.2,2.4 58.8,2.0 H62.6 V10.8 Z" fill="none" stroke="#d8d8d8" stroke-width="0.9" stroke-linejoin="round"/><path d="M53.8,4.8 V2.0 H56.6" fill="none" stroke="#6a6a6a" stroke-width="0.6" stroke-dasharray="0.8 0.8"/><path d="M141.6,2 l2.8,2.8 l-1,0.4 l-1.4,1.6 l0.2,1.6 l-1,0.9 l-3.4,-3.4 l0.9,-1 l1.6,0.2 l1.6,-1.4 Z M139.4,7.4 L136.6,10.4" fill="none" stroke="#bdbdbd" stroke-width="0.8" stroke-linejoin="round"/></svg>
<span class="t" style="left:869.80px;top:177px;color:#e2e2e2;font-size:7.9px;letter-spacing:-0.372px;">Cube</span>
<span class="t" style="left:921.70px;top:177px;color:#e2e2e2;font-size:7.9px;letter-spacing:-0.082px;">Bevel.001</span>
<div style="left:853.1px;top:198.3px;width:146px;height:11.5px;background:#545454;border-radius:3px;"></div>
<svg style="left:853.1px;top:198.3px;" width="20" height="11.5" viewBox="0 0 20 11.5"><path d="M4.4,5.8 H9.6 M7,3.2 V8.4" stroke="#e8e8e8" stroke-width="0.9"/></svg>
<span class="t" style="left:910.60px;top:199px;color:#f0f0f0;font-size:7.9px;letter-spacing:-0.188px;">Add Modifier</span>
<div style="left:853.1px;top:216.6px;width:146px;height:15.3px;background:#3b3b3b;border-radius:3px;"></div>
<div style="left:883.6px;top:218.7px;width:34.2px;height:11px;background:#1d1d1d;border-radius:3px 0 0 3px;"></div>
<span class="t" style="left:888.00px;top:219px;color:#f0f0f0;font-size:7.9px;letter-spacing:-0.152px;">Bevel</span>
<div style="left:917.8px;top:218.7px;width:12.3px;height:11px;background:#4772b3;"></div>
<div style="left:930.6px;top:218.7px;width:12.1px;height:11px;background:#4772b3;"></div>
<div style="left:943.2px;top:218.7px;width:12px;height:11px;background:#4772b3;"></div>
<div style="left:955.2px;top:218.7px;width:12.6px;height:11px;background:#282828;border-radius:0 3px 3px 0;"></div>
<svg style="left:853.1px;top:216.6px;" width="146" height="15.2" viewBox="0 0 146 15.2"><polyline points="6.5,5.2 8.9,7.6 6.5,10.0" fill="none" stroke="#d8d8d8" stroke-width="1" stroke-linecap="round" stroke-linejoin="round"/><path d="M14.6,12.0 V8.2 Q15.0,3.6 19.6,3.2 H23.4 V12.0 Z" fill="none" stroke="#d8d8d8" stroke-width="0.9" stroke-linejoin="round"/><path d="M14.6,6.0 V3.2 H17.4" fill="none" stroke="#6a6a6a" stroke-width="0.6" stroke-dasharray="0.8 0.8"/><rect x="67.2" y="4.8" width="6" height="6" fill="none" stroke="#e0e8f4" stroke-width="0.8"/><rect x="71.4" y="2.8" width="3.4" height="3.4" fill="#ffffff"/><circle cx="67.2" cy="4.8" r="1" fill="#e0e8f4"/><circle cx="67.2" cy="10.8" r="1" fill="#e0e8f4"/><circle cx="73.2" cy="10.8" r="1" fill="#e0e8f4"/><rect x="79.6" y="4" width="8.2" height="5.8" rx="0.8" fill="#e8e8e8"/><rect x="80.8" y="5.2" width="5.8" height="3.4" fill="#88a6d4"/><path d="M81.8,11.2 h3.8 M83.7,9.8 v1.4" stroke="#e8e8e8" stroke-width="0.9"/><rect x="92" y="4.8" width="8.4" height="6" rx="1" fill="#e8e8e8"/><rect x="94.6" y="3.4" width="3.2" height="1.8" fill="#e8e8e8"/><circle cx="96.2" cy="7.8" r="1.9" fill="#4772b3"/><circle cx="96.2" cy="7.8" r="0.9" fill="#e8e8e8"/><polyline points="106.1,6.7 108.4,8.9 110.7,6.7" fill="none" stroke="#e0e0e0" stroke-width="1" stroke-linecap="round" stroke-linejoin="round"/><path d="M119.4,5.6 l4.2,4.2 M123.6,5.6 l-4.2,4.2" stroke="#d8d8d8" stroke-width="0.9"/><rect x="133.90" y="5.10" width="1.25" height="1.05" fill="#777"/><rect x="133.90" y="8.00" width="1.25" height="1.05" fill="#777"/><rect x="135.95" y="5.10" width="1.25" height="1.05" fill="#777"/><rect x="135.95" y="8.00" width="1.25" height="1.05" fill="#777"/><rect x="138.00" y="5.10" width="1.25" height="1.05" fill="#777"/><rect x="138.00" y="8.00" width="1.25" height="1.05" fill="#777"/><rect x="140.05" y="5.10" width="1.25" height="1.05" fill="#777"/><rect x="140.05" y="8.00" width="1.25" height="1.05" fill="#777"/></svg>
<div style="left:853.1px;top:233.1px;width:146px;height:163.3px;background:#3b3b3b;border-radius:3px;box-shadow:inset 0 0 0 0.9px #4772b3;"></div>
<div style="left:883.6px;top:235.3px;width:34.2px;height:11px;background:#1d1d1d;border-radius:3px 0 0 3px;"></div>
<span class="t" style="left:888.00px;top:236px;color:#f0f0f0;font-size:7.9px;letter-spacing:-0.418px;">Bevel...</span>
<div style="left:917.8px;top:235.3px;width:12.3px;height:11px;background:#4772b3;"></div>
<div style="left:930.6px;top:235.3px;width:12.1px;height:11px;background:#4772b3;"></div>
<div style="left:943.2px;top:235.3px;width:12px;height:11px;background:#4772b3;"></div>
<div style="left:955.2px;top:235.3px;width:12.6px;height:11px;background:#282828;border-radius:0 3px 3px 0;"></div>
<svg style="left:853.1px;top:233.2px;" width="146" height="15.2" viewBox="0 0 146 15.2"><polyline points="5.3,6.4 7.7,8.8 10.1,6.4" fill="none" stroke="#d8d8d8" stroke-width="1" stroke-linecap="round" stroke-linejoin="round"/><path d="M14.6,12.0 V8.2 Q15.0,3.6 19.6,3.2 H23.4 V12.0 Z" fill="none" stroke="#d8d8d8" stroke-width="0.9" stroke-linejoin="round"/><path d="M14.6,6.0 V3.2 H17.4" fill="none" stroke="#6a6a6a" stroke-width="0.6" stroke-dasharray="0.8 0.8"/><rect x="67.2" y="4.8" width="6" height="6" fill="none" stroke="#e0e8f4" stroke-width="0.8"/><rect x="71.4" y="2.8" width="3.4" height="3.4" fill="#ffffff"/><circle cx="67.2" cy="4.8" r="1" fill="#e0e8f4"/><circle cx="67.2" cy="10.8" r="1" fill="#e0e8f4"/><circle cx="73.2" cy="10.8" r="1" fill="#e0e8f4"/><rect x="79.6" y="4" width="8.2" height="5.8" rx="0.8" fill="#e8e8e8"/><rect x="80.8" y="5.2" width="5.8" height="3.4" fill="#88a6d4"/><path d="M81.8,11.2 h3.8 M83.7,9.8 v1.4" stroke="#e8e8e8" stroke-width="0.9"/><rect x="92" y="4.8" width="8.4" height="6" rx="1" fill="#e8e8e8"/><rect x="94.6" y="3.4" width="3.2" height="1.8" fill="#e8e8e8"/><circle cx="96.2" cy="7.8" r="1.9" fill="#4772b3"/><circle cx="96.2" cy="7.8" r="0.9" fill="#e8e8e8"/><polyline points="106.1,6.7 108.4,8.9 110.7,6.7" fill="none" stroke="#e0e0e0" stroke-width="1" stroke-linecap="round" stroke-linejoin="round"/><path d="M119.4,5.6 l4.2,4.2 M123.6,5.6 l-4.2,4.2" stroke="#d8d8d8" stroke-width="0.9"/><rect x="133.90" y="5.10" width="1.25" height="1.05" fill="#777"/><rect x="133.90" y="8.00" width="1.25" height="1.05" fill="#777"/><rect x="135.95" y="5.10" width="1.25" height="1.05" fill="#777"/><rect x="135.95" y="8.00" width="1.25" height="1.05" fill="#777"/><rect x="138.00" y="5.10" width="1.25" height="1.05" fill="#777"/><rect x="138.00" y="8.00" width="1.25" height="1.05" fill="#777"/><rect x="140.05" y="5.10" width="1.25" height="1.05" fill="#777"/><rect x="140.05" y="8.00" width="1.25" height="1.05" fill="#777"/></svg>
<div style="left:858.1px;top:254.3px;width:67.7px;height:11.6px;background:#545454;border-radius:3px 0 0 3px;"></div>
<div style="left:925.8px;top:254.3px;width:67.9px;height:11.6px;background:#4772b3;border-radius:0 3px 3px 0;"></div>
<span class="t" style="left:878.20px;top:254px;color:#e6e6e6;font-size:7.9px;letter-spacing:-0.163px;">Vertices</span>
<span class="t" style="left:949.50px;top:254px;color:#ffffff;font-size:7.9px;letter-spacing:-0.440px;">Edges</span>
<span class="t" style="left:867.10px;top:270px;color:#e2e2e2;font-size:7.9px;letter-spacing:-0.257px;">Width Type</span>
<div style="left:910.2px;top:269.7px;width:70.7px;height:10.8px;background:#282828;border-radius:3px;"></div>
<span class="t" style="left:914.90px;top:270px;color:#e2e2e2;font-size:7.9px;letter-spacing:-0.105px;">Offset</span>
<svg style="left:970px;top:269.7px;" width="11" height="10.8" viewBox="0 0 11 10.8"><polyline points="4.7,4.8 6.6,6.8 8.5,4.8" fill="none" stroke="#e0e0e0" stroke-width="0.9" stroke-linecap="round" stroke-linejoin="round"/></svg>
<div style="left:986.6px;top:274px;width:2px;height:2px;background:#d8d8d8;border-radius:1px;"></div>
<span class="t" style="left:878.20px;top:283px;color:#e2e2e2;font-size:7.9px;letter-spacing:-0.254px;">Amount</span>
<div style="left:910.2px;top:283.2px;width:70.7px;height:10.8px;background:#545454;border-radius:3px;"></div>
<span class="t" style="left:932.80px;top:283px;color:#e8e8e8;font-size:7.9px;letter-spacing:0.041px;">0.05 m</span>
<div style="left:986.6px;top:287.6px;width:2px;height:2px;background:#d8d8d8;border-radius:1px;"></div>
<span class="t" style="left:871.00px;top:298px;color:#e2e2e2;font-size:7.9px;letter-spacing:-0.334px;">Segments</span>
<div style="left:910.2px;top:298.3px;width:70.7px;height:10.8px;background:#545454;border-radius:3px;"></div>
<span class="t" style="left:942.10px;top:298px;color:#e8e8e8;font-size:7.9px;">4</span>
<div style="left:986.6px;top:302.7px;width:2px;height:2px;background:#d8d8d8;border-radius:1px;"></div>
<span class="t" style="left:861.50px;top:320px;color:#e2e2e2;font-size:7.9px;letter-spacing:-0.235px;">Limit Method</span>
<div style="left:910.2px;top:320px;width:70.7px;height:10.6px;background:#282828;border-radius:3px;"></div>
<span class="t" style="left:914.80px;top:320px;color:#e2e2e2;font-size:7.9px;letter-spacing:-0.224px;">Weight</span>
<svg style="left:970px;top:320px;" width="11" height="10.6" viewBox="0 0 11 10.6"><polyline points="4.7,4.6 6.6,6.5 8.5,4.6" fill="none" stroke="#e0e0e0" stroke-width="0.9" stroke-linecap="round" stroke-linejoin="round"/></svg>
<div style="left:986.6px;top:324.4px;width:2px;height:2px;background:#d8d8d8;border-radius:1px;"></div>
<span class="t" style="left:861.50px;top:334px;color:#e2e2e2;font-size:7.9px;letter-spacing:-0.245px;">Edge Weight</span>
<div style="left:910.2px;top:333.6px;width:70.7px;height:10.6px;background:#1d1d1d;border-radius:3px;"></div>
<span class="t" style="left:914.80px;top:334px;color:#e2e2e2;font-size:7.9px;letter-spacing:-0.293px;">Bevel Sides</span>
<svg style="left:969px;top:333.6px;" width="10" height="10.6" viewBox="0 0 10 10.6"><path d="M2.6,3.2 l4.2,4.2 M6.8,3.2 l-4.2,4.2" stroke="#d0d0d0" stroke-width="0.8"/></svg>
<svg style="left:864px;top:353.4px;" width="10" height="10" viewBox="0 0 10 10"><polyline points="3.9,2.8 6.1,5.0 3.9,7.2" fill="none" stroke="#d8d8d8" stroke-width="0.9" stroke-linecap="round" stroke-linejoin="round"/></svg>
<span class="t" style="left:875.00px;top:353px;color:#e2e2e2;font-size:7.9px;letter-spacing:-0.185px;">Profile</span>
<svg style="left:864px;top:369.1px;" width="10" height="10" viewBox="0 0 10 10"><polyline points="3.9,2.8 6.1,5.0 3.9,7.2" fill="none" stroke="#d8d8d8" stroke-width="0.9" stroke-linecap="round" stroke-linejoin="round"/></svg>
<span class="t" style="left:875.00px;top:369px;color:#e2e2e2;font-size:7.9px;letter-spacing:-0.273px;">Geometry</span>
<svg style="left:864px;top:384.7px;" width="10" height="10" viewBox="0 0 10 10"><polyline points="3.9,2.8 6.1,5.0 3.9,7.2" fill="none" stroke="#d8d8d8" stroke-width="0.9" stroke-linecap="round" stroke-linejoin="round"/></svg>
<span class="t" style="left:875.00px;top:384px;color:#e2e2e2;font-size:7.9px;letter-spacing:-0.399px;">Shading</span>
<div style="left:0px;top:476.2px;width:811px;height:58.3px;background:#303030;border-radius:0 3px 3px 0;"></div>
<div style="left:0px;top:492px;width:811px;height:14.6px;background:#1e1e1e;"></div>
<div style="left:0px;top:506.6px;width:811px;height:21.6px;background:#232323;"></div>
<div style="left:24.622px;top:506.6px;width:755.975px;height:21.6px;background:#2d2d2d;"></div>
<svg style="left:0px;top:506.6px;" width="811" height="21.6" viewBox="0 0 811 21.6"><line x1="24.6" y1="0" x2="24.6" y2="21.6" stroke="#202020" stroke-width="0.8"/><line x1="39.7" y1="0" x2="39.7" y2="21.6" stroke="#202020" stroke-width="0.8"/><line x1="54.9" y1="0" x2="54.9" y2="21.6" stroke="#202020" stroke-width="0.8"/><line x1="70.0" y1="0" x2="70.0" y2="21.6" stroke="#202020" stroke-width="0.8"/><line x1="85.1" y1="0" x2="85.1" y2="21.6" stroke="#202020" stroke-width="0.8"/><line x1="100.2" y1="0" x2="100.2" y2="21.6" stroke="#202020" stroke-width="0.8"/><line x1="115.3" y1="0" x2="115.3" y2="21.6" stroke="#202020" stroke-width="0.8"/><line x1="130.5" y1="0" x2="130.5" y2="21.6" stroke="#202020" stroke-width="0.8"/><line x1="145.6" y1="0" x2="145.6" y2="21.6" stroke="#202020" stroke-width="0.8"/><line x1="160.7" y1="0" x2="160.7" y2="21.6" stroke="#202020" stroke-width="0.8"/><line x1="175.8" y1="0" x2="175.8" y2="21.6" stroke="#202020" stroke-width="0.8"/><line x1="190.9" y1="0" x2="190.9" y2="21.6" stroke="#202020" stroke-width="0.8"/><line x1="206.1" y1="0" x2="206.1" y2="21.6" stroke="#202020" stroke-width="0.8"/><line x1="221.2" y1="0" x2="221.2" y2="21.6" stroke="#202020" stroke-width="0.8"/><line x1="236.3" y1="0" x2="236.3" y2="21.6" stroke="#202020" stroke-width="0.8"/><line x1="251.4" y1="0" x2="251.4" y2="21.6" stroke="#202020" stroke-width="0.8"/><line x1="266.5" y1="0" x2="266.5" y2="21.6" stroke="#202020" stroke-width="0.8"/><line x1="281.7" y1="0" x2="281.7" y2="21.6" stroke="#202020" stroke-width="0.8"/><line x1="296.8" y1="0" x2="296.8" y2="21.6" stroke="#202020" stroke-width="0.8"/><line x1="311.9" y1="0" x2="311.9" y2="21.6" stroke="#202020" stroke-width="0.8"/><line x1="327.0" y1="0" x2="327.0" y2="21.6" stroke="#202020" stroke-width="0.8"/><line x1="342.1" y1="0" x2="342.1" y2="21.6" stroke="#202020" stroke-width="0.8"/><line x1="357.3" y1="0" x2="357.3" y2="21.6" stroke="#202020" stroke-width="0.8"/><line x1="372.4" y1="0" x2="372.4" y2="21.6" stroke="#202020" stroke-width="0.8"/><line x1="387.5" y1="0" x2="387.5" y2="21.6" stroke="#202020" stroke-width="0.8"/><line x1="402.6" y1="0" x2="402.6" y2="21.6" stroke="#202020" stroke-width="0.8"/><line x1="417.7" y1="0" x2="417.7" y2="21.6" stroke="#202020" stroke-width="0.8"/><line x1="432.8" y1="0" x2="432.8" y2="21.6" stroke="#202020" stroke-width="0.8"/><line x1="448.0" y1="0" x2="448.0" y2="21.6" stroke="#202020" stroke-width="0.8"/><line x1="463.1" y1="0" x2="463.1" y2="21.6" stroke="#202020" stroke-width="0.8"/><line x1="478.2" y1="0" x2="478.2" y2="21.6" stroke="#202020" stroke-width="0.8"/><line x1="493.3" y1="0" x2="493.3" y2="21.6" stroke="#202020" stroke-width="0.8"/><line x1="508.4" y1="0" x2="508.4" y2="21.6" stroke="#202020" stroke-width="0.8"/><line x1="523.6" y1="0" x2="523.6" y2="21.6" stroke="#202020" stroke-width="0.8"/><line x1="538.7" y1="0" x2="538.7" y2="21.6" stroke="#202020" stroke-width="0.8"/><line x1="553.8" y1="0" x2="553.8" y2="21.6" stroke="#202020" stroke-width="0.8"/><line x1="568.9" y1="0" x2="568.9" y2="21.6" stroke="#202020" stroke-width="0.8"/><line x1="584.0" y1="0" x2="584.0" y2="21.6" stroke="#202020" stroke-width="0.8"/><line x1="599.2" y1="0" x2="599.2" y2="21.6" stroke="#202020" stroke-width="0.8"/><line x1="614.3" y1="0" x2="614.3" y2="21.6" stroke="#202020" stroke-width="0.8"/><line x1="629.4" y1="0" x2="629.4" y2="21.6" stroke="#202020" stroke-width="0.8"/><line x1="644.5" y1="0" x2="644.5" y2="21.6" stroke="#202020" stroke-width="0.8"/><line x1="659.6" y1="0" x2="659.6" y2="21.6" stroke="#202020" stroke-width="0.8"/><line x1="674.8" y1="0" x2="674.8" y2="21.6" stroke="#202020" stroke-width="0.8"/><line x1="689.9" y1="0" x2="689.9" y2="21.6" stroke="#202020" stroke-width="0.8"/><line x1="705.0" y1="0" x2="705.0" y2="21.6" stroke="#202020" stroke-width="0.8"/><line x1="720.1" y1="0" x2="720.1" y2="21.6" stroke="#202020" stroke-width="0.8"/><line x1="735.2" y1="0" x2="735.2" y2="21.6" stroke="#202020" stroke-width="0.8"/><line x1="750.4" y1="0" x2="750.4" y2="21.6" stroke="#202020" stroke-width="0.8"/><line x1="765.5" y1="0" x2="765.5" y2="21.6" stroke="#202020" stroke-width="0.8"/><line x1="780.6" y1="0" x2="780.6" y2="21.6" stroke="#202020" stroke-width="0.8"/><line x1="795.7" y1="0" x2="795.7" y2="21.6" stroke="#202020" stroke-width="0.8"/></svg>
<span class="t" style="left:50.52px;top:495px;color:#c8c8c8;font-size:7.8px;letter-spacing:0.35px;">10</span>
<span class="t" style="left:80.76px;top:495px;color:#c8c8c8;font-size:7.8px;letter-spacing:0.35px;">20</span>
<span class="t" style="left:111.00px;top:495px;color:#c8c8c8;font-size:7.8px;letter-spacing:0.35px;">30</span>
<span class="t" style="left:141.24px;top:495px;color:#c8c8c8;font-size:7.8px;letter-spacing:0.35px;">40</span>
<span class="t" style="left:171.48px;top:495px;color:#c8c8c8;font-size:7.8px;letter-spacing:0.35px;">50</span>
<span class="t" style="left:201.72px;top:495px;color:#c8c8c8;font-size:7.8px;letter-spacing:0.35px;">60</span>
<span class="t" style="left:231.96px;top:495px;color:#c8c8c8;font-size:7.8px;letter-spacing:0.35px;">70</span>
<span class="t" style="left:262.20px;top:495px;color:#c8c8c8;font-size:7.8px;letter-spacing:0.35px;">80</span>
<span class="t" style="left:292.43px;top:495px;color:#c8c8c8;font-size:7.8px;letter-spacing:0.35px;">90</span>
<span class="t" style="left:320.50px;top:495px;color:#c8c8c8;font-size:7.8px;letter-spacing:0.35px;">100</span>
<span class="t" style="left:351.03px;top:495px;color:#c8c8c8;font-size:7.8px;letter-spacing:0.35px;">110</span>
<span class="t" style="left:380.98px;top:495px;color:#c8c8c8;font-size:7.8px;letter-spacing:0.35px;">120</span>
<span class="t" style="left:411.22px;top:495px;color:#c8c8c8;font-size:7.8px;letter-spacing:0.35px;">130</span>
<span class="t" style="left:441.46px;top:495px;color:#c8c8c8;font-size:7.8px;letter-spacing:0.35px;">140</span>
<span class="t" style="left:471.70px;top:495px;color:#c8c8c8;font-size:7.8px;letter-spacing:0.35px;">150</span>
<span class="t" style="left:501.94px;top:495px;color:#c8c8c8;font-size:7.8px;letter-spacing:0.35px;">160</span>
<span class="t" style="left:532.18px;top:495px;color:#c8c8c8;font-size:7.8px;letter-spacing:0.35px;">170</span>
<span class="t" style="left:562.42px;top:495px;color:#c8c8c8;font-size:7.8px;letter-spacing:0.35px;">180</span>
<span class="t" style="left:592.66px;top:495px;color:#c8c8c8;font-size:7.8px;letter-spacing:0.35px;">190</span>
<span class="t" style="left:622.89px;top:495px;color:#c8c8c8;font-size:7.8px;letter-spacing:0.35px;">200</span>
<span class="t" style="left:653.13px;top:495px;color:#c8c8c8;font-size:7.8px;letter-spacing:0.35px;">210</span>
<span class="t" style="left:683.37px;top:495px;color:#c8c8c8;font-size:7.8px;letter-spacing:0.35px;">220</span>
<span class="t" style="left:713.61px;top:495px;color:#c8c8c8;font-size:7.8px;letter-spacing:0.35px;">230</span>
<span class="t" style="left:743.85px;top:495px;color:#c8c8c8;font-size:7.8px;letter-spacing:0.35px;">240</span>
<span class="t" style="left:774.09px;top:495px;color:#c8c8c8;font-size:7.8px;letter-spacing:0.35px;">250</span>
<div style="left:27.1459px;top:500px;width:1px;height:34.5px;background:#4a78c0;"></div>
<div style="left:20.4459px;top:494.2px;width:14.6px;height:10.6px;background:#4772b3;border-radius:2.5px;"></div>
<span class="t" style="left:25.48px;top:495px;color:#ffffff;font-size:7.8px;font-weight:bold;">1</span>
<div style="left:0px;top:528.2px;width:811px;height:6.3px;background:#303030;border-radius:0 0 3px 0;"></div>
<div style="left:3.2px;top:529px;width:802px;height:5px;background:#565656;border-radius:2.5px;"></div>
<svg style="left:3.2px;top:529px;" width="6" height="5" viewBox="0 0 6 5"><circle cx="2.6" cy="2.5" r="1.7" fill="#2a2a2a"/></svg>
<svg style="left:799.4px;top:529px;" width="6" height="5" viewBox="0 0 6 5"><circle cx="3.3" cy="2.5" r="1.7" fill="#2a2a2a"/></svg>
<div style="left:27.1459px;top:528px;width:1px;height:6.5px;background:#4a78c0;"></div>
<div style="left:4px;top:479.4px;width:18px;height:10.8px;background:#2b2b2b;border-radius:3px;"></div>
<svg style="left:4px;top:479.4px;" width="18" height="10.8" viewBox="0 0 18 10.8"><circle cx="6.6" cy="5.4" r="4" fill="#ececec"/><path d="M6.6,5.4 L6.6,2.4 M6.6,5.4 L8.8,6.8" stroke="#2b2b2b" stroke-width="0.9"/><path d="M6.6,5.4 L6.6,1.4 A4,4 0 0 1 10.6,5.4 Z" fill="#2b2b2b"/><polyline points="12.8,4.7 14.6,6.5 16.4,4.7" fill="none" stroke="#d8d8d8" stroke-width="0.9" stroke-linecap="round" stroke-linejoin="round"/></svg>
<div style="left:26.3px;top:479.4px;width:44px;height:10.8px;background:#2b2b2b;border-radius:3px;"></div>
<span class="t" style="left:30.60px;top:479px;color:#e2e2e2;font-size:7.9px;letter-spacing:-0.332px;">Playback</span>
<svg style="left:60px;top:479.4px;" width="11" height="10.8" viewBox="0 0 11 10.8"><polyline points="3.8,4.9 5.6,6.7 7.4,4.9" fill="none" stroke="#d8d8d8" stroke-width="0.9" stroke-linecap="round" stroke-linejoin="round"/></svg>
<div style="left:72.3px;top:479.4px;width:36.4px;height:10.8px;background:#2b2b2b;border-radius:3px;"></div>
<span class="t" style="left:75.60px;top:479px;color:#e2e2e2;font-size:7.9px;letter-spacing:-0.293px;">Keying</span>
<svg style="left:98px;top:479.4px;" width="11" height="10.8" viewBox="0 0 11 10.8"><polyline points="4.0,4.9 5.8,6.7 7.6,4.9" fill="none" stroke="#d8d8d8" stroke-width="0.9" stroke-linecap="round" stroke-linejoin="round"/></svg>
<span class="t" style="left:114.70px;top:479px;color:#e2e2e2;font-size:7.9px;letter-spacing:-0.170px;">View</span>
<span class="t" style="left:140.50px;top:479px;color:#e2e2e2;font-size:7.9px;letter-spacing:-0.263px;">Marker</span>
<div style="left:346.4px;top:479.4px;width:12.2px;height:10.8px;background:#545454;border-radius:3px 0 0 3px;"></div>
<div style="left:358.6px;top:479.4px;width:11.4px;height:10.8px;background:#3a3a3a;border-radius:0 3px 3px 0;"></div>
<svg style="left:346.4px;top:479.4px;" width="24" height="10.8" viewBox="0 0 24 10.8"><circle cx="6.1" cy="5.4" r="2.7" fill="none" stroke="#a0a0a0" stroke-width="1"/><polyline points="15.9,5.0 17.6,6.6 19.3,5.0" fill="none" stroke="#6a6a6a" stroke-width="0.8" stroke-linecap="round" stroke-linejoin="round"/></svg>
<div style="left:374.8px;top:479.4px;width:74px;height:10.8px;background:#545454;border-radius:3px;"></div>
<div style="left:386.8px;top:479.4px;width:0.6px;height:10.8px;background:#484848;"></div>
<div style="left:399.1px;top:479.4px;width:0.6px;height:10.8px;background:#484848;"></div>
<div style="left:411.4px;top:479.4px;width:0.6px;height:10.8px;background:#484848;"></div>
<div style="left:423.7px;top:479.4px;width:0.6px;height:10.8px;background:#484848;"></div>
<div style="left:436px;top:479.4px;width:0.6px;height:10.8px;background:#484848;"></div>
<svg style="left:374.8px;top:479.4px;" width="76" height="10.8" viewBox="0 0 76 10.8"><path d="M3.2,1.8 v7.2" stroke="#f0f0f0" stroke-width="1.3"/><path d="M9.6,1.6 L4.6,5.4 L9.6,9.2 Z" fill="#f0f0f0"/><path d="M16.8,1.8 l3,3.6 l-3,3.6 l-3,-3.6 Z" fill="#f0f0f0"/><path d="M20.2,5.4 l2.6,-2.6 v5.2 Z" fill="#f0f0f0"/><path d="M34.1,1.2 L26.7,5.4 L34.1,9.6 Z" fill="#f0f0f0"/><path d="M39.7,1.2 L47.1,5.4 L39.7,9.6 Z" fill="#f0f0f0"/><path d="M56.9,1.8 l3,3.6 l-3,3.6 l-3,-3.6 Z" fill="#f0f0f0"/><path d="M53.5,5.4 l-2.6,-2.6 v5.2 Z" fill="#f0f0f0"/><path d="M70.8,1.8 v7.2" stroke="#f0f0f0" stroke-width="1.3"/><path d="M64.3,1.6 L69.3,5.4 L64.3,9.2 Z" fill="#f0f0f0"/></svg>
<div style="left:634.9px;top:479.3px;width:46.2px;height:10.8px;background:#545454;border-radius:3px;"></div>
<span class="t" style="left:655.20px;top:479px;color:#ececec;font-size:7.9px;">1</span>
<div style="left:684px;top:479.3px;width:12.5px;height:10.8px;background:#545454;border-radius:3px 0 0 3px;"></div>
<svg style="left:684px;top:479.3px;" width="12.5" height="10.8" viewBox="0 0 12.5 10.8"><circle cx="6.2" cy="6" r="3.2" fill="none" stroke="#e0e0e0" stroke-width="0.9"/><path d="M6.2,6 V4 M6.2,6 L7.6,6.8 M5,1.6 h2.4 M9,2.4 l0.9,0.9" stroke="#e0e0e0" stroke-width="0.8" fill="none"/></svg>
<div style="left:697px;top:479.3px;width:54.5px;height:10.8px;background:#545454;"></div>
<div style="left:752px;top:479.3px;width:53.8px;height:10.8px;background:#545454;border-radius:0 3px 3px 0;"></div>
<span class="t" style="left:706.50px;top:479px;color:#ececec;font-size:7.9px;letter-spacing:-0.357px;">Start</span>
<span class="t" style="left:738.50px;top:479px;color:#ececec;font-size:7.9px;">1</span>
<span class="t" style="left:761.90px;top:479px;color:#ececec;font-size:7.9px;letter-spacing:-0.419px;">End</span>
<span class="t" style="left:783.20px;top:479px;color:#ececec;font-size:7.9px;letter-spacing:0.173px;">250</span>
<div style="left:807.4px;top:498.5px;width:1.6px;height:20px;background:#3c3c3c;border-radius:1px;"></div>
<div style="left:813px;top:476.2px;width:16.4px;height:58.3px;background:#303030;border-radius:3px;"></div>
<div style="left:813px;top:492px;width:16.4px;height:40px;background:#1e1e1e;border-radius:0 0 3px 3px;"></div>
<div style="left:816.4px;top:479.4px;width:10px;height:10.8px;background:#2b2b2b;border-radius:3px;"></div>
<svg style="left:816.4px;top:479.4px;" width="13" height="10.8" viewBox="0 0 13 10.8"><circle cx="7.4" cy="7" r="2.1" fill="#f4f4f4"/><circle cx="4" cy="4.6" r="1.1" fill="#e0e0e0"/><circle cx="2.4" cy="2" r="0.6" fill="#d0d0d0"/><circle cx="5" cy="1.8" r="0.6" fill="#d0d0d0"/></svg>
<svg style="left:806px;top:500px;" width="24" height="12" viewBox="0 0 24 12"><polyline points="4.6,4.0 2.6,6.0 4.6,8.0" fill="none" stroke="#6a6a6a" stroke-width="0.7" stroke-linecap="round" stroke-linejoin="round"/><polyline points="7.5,3.8 9.7,6.0 7.5,8.2" fill="none" stroke="#d0d0d0" stroke-width="0.9" stroke-linecap="round" stroke-linejoin="round"/><polyline points="21.7,3.8 19.5,6.0 21.7,8.2" fill="none" stroke="#d0d0d0" stroke-width="0.9" stroke-linecap="round" stroke-linejoin="round"/></svg>
<div style="left:825.6px;top:498.5px;width:1.6px;height:20px;background:#3a3a3a;border-radius:1px;"></div>
<div style="left:815px;top:532px;width:10px;height:1px;background:#3a3a3a;"></div>
<div style="left:0px;top:535px;width:1005px;height:13.5px;background:#1a1a1a;"></div>
<div style="left:2.6px;top:538.3px;width:21.2px;height:8.6px;background:transparent;border-radius:2px;border:0.8px solid #9a9a9a;box-sizing:border-box;"></div>
<span class="t" style="left:5.20px;top:537px;color:#c0c0c0;font-size:6px;letter-spacing:-0.163px;">Space</span>
<span class="t" style="left:27.00px;top:537px;color:#b4b4b4;font-size:7.9px;letter-spacing:-0.372px;">Search</span>
<span class="t" style="left:613.30px;top:538px;color:#b4b4b4;font-size:7.9px;letter-spacing:-0.347px;">Cube</span>
<span class="t" style="left:637.80px;top:538px;color:#b4b4b4;font-size:7.9px;letter-spacing:-0.053px;">Verts:2/8</span>
<span class="t" style="left:674.90px;top:538px;color:#b4b4b4;font-size:7.9px;letter-spacing:-0.107px;">Edges:1/12</span>
<span class="t" style="left:720.70px;top:538px;color:#b4b4b4;font-size:7.9px;letter-spacing:-0.121px;">Faces:0/6</span>
<span class="t" style="left:761.40px;top:538px;color:#b4b4b4;font-size:7.9px;letter-spacing:-0.164px;">Tris:12</span>
<span class="t" style="left:791.10px;top:538px;color:#b4b4b4;font-size:7.9px;letter-spacing:-0.133px;">Objects:1/1</span>
<span class="t" style="left:837.00px;top:538px;color:#b4b4b4;font-size:7.9px;letter-spacing:-0.169px;">Memory: 29.3 MiB</span>
<span class="t" style="left:905.70px;top:538px;color:#b4b4b4;font-size:7.9px;letter-spacing:-0.218px;">VRAM: 1.4/12.0 GiB</span>
<span class="t" style="left:979.30px;top:538px;color:#b4b4b4;font-size:7.9px;letter-spacing:-0.074px;">4.3.2</span>
<div style="left:634px;top:538.6px;width:0.8px;height:8.6px;background:#a0a0a0;"></div>
<div style="left:671.6px;top:538.6px;width:0.8px;height:8.6px;background:#a0a0a0;"></div>
<div style="left:717.1px;top:538.6px;width:0.8px;height:8.6px;background:#a0a0a0;"></div>
<div style="left:757.6px;top:538.6px;width:0.8px;height:8.6px;background:#a0a0a0;"></div>
<div style="left:787.6px;top:538.6px;width:0.8px;height:8.6px;background:#a0a0a0;"></div>
<div style="left:833.1px;top:538.6px;width:0.8px;height:8.6px;background:#a0a0a0;"></div>
<div style="left:901.8px;top:538.6px;width:0.8px;height:8.6px;background:#a0a0a0;"></div>
<div style="left:976px;top:538.6px;width:0.8px;height:8.6px;background:#a0a0a0;"></div>
<div style="left:505.2px;top:47.3px;width:108.2px;height:309.8px;background:#181818;border-radius:0 3px 4px 4px;box-shadow:0 1px 4px rgba(0,0,0,0.45);"></div>
<div style="left:506.8px;top:284.6px;width:105.2px;height:11.4px;background:#424242;border-radius:2.5px;"></div>
<span class="t" style="left:525.00px;top:50px;color:#e6e6e6;font-size:7.9px;letter-spacing:-0.234px;">Transform</span>
<div style="left:525px;top:58.8px;width:4.82579px;height:0.7px;background:#d0d0d0;"></div>
<span class="t" style="left:525.00px;top:63px;color:#e6e6e6;font-size:7.9px;letter-spacing:0.229px;">Mirror</span>
<div style="left:525px;top:71.3px;width:6.58107px;height:0.7px;background:#d0d0d0;"></div>
<span class="t" style="left:525.00px;top:75px;color:#e6e6e6;font-size:7.9px;letter-spacing:-0.013px;">Snap</span>
<div style="left:525px;top:83.9px;width:5.26955px;height:0.7px;background:#d0d0d0;"></div>
<span class="t" style="left:525.00px;top:92px;color:#e6e6e6;font-size:7.9px;letter-spacing:-0.215px;">Duplicate</span>
<div style="left:525px;top:100.6px;width:5.70528px;height:0.7px;background:#d0d0d0;"></div>
<span class="t" style="left:582.39px;top:92px;color:#7a7a7a;font-size:7.6px;">Shift D</span>
<span class="t" style="left:525.00px;top:105px;color:#e6e6e6;font-size:7.9px;letter-spacing:-0.290px;">Extrude</span>
<div style="left:525px;top:113.3px;width:5.26955px;height:0.7px;background:#d0d0d0;"></div>
<span class="t" style="left:588.35px;top:105px;color:#7a7a7a;font-size:7.6px;">Alt E</span>
<span class="t" style="left:525.00px;top:121px;color:#e6e6e6;font-size:7.9px;letter-spacing:-0.119px;">Merge</span>
<div style="left:535.737px;top:130px;width:2.63107px;height:0.7px;background:#d0d0d0;"></div>
<span class="t" style="left:598.07px;top:121px;color:#7a7a7a;font-size:7.6px;">M</span>
<span class="t" style="left:525.00px;top:134px;color:#e6e6e6;font-size:7.9px;letter-spacing:-0.194px;">Split</span>
<div style="left:534.276px;top:142.6px;width:1.75528px;height:0.7px;background:#d0d0d0;"></div>
<span class="t" style="left:587.09px;top:134px;color:#7a7a7a;font-size:7.6px;">Alt M</span>
<span class="t" style="left:525.00px;top:147px;color:#e6e6e6;font-size:7.9px;letter-spacing:-0.333px;">Separate</span>
<div style="left:533.997px;top:155.2px;width:4.39376px;height:0.7px;background:#d0d0d0;"></div>
<span class="t" style="left:599.33px;top:147px;color:#7a7a7a;font-size:7.6px;">P</span>
<span class="t" style="left:525.00px;top:163px;color:#e6e6e6;font-size:7.9px;letter-spacing:-0.119px;">Bisect</span>
<div style="left:525px;top:172px;width:5.26955px;height:0.7px;background:#d0d0d0;"></div>
<span class="t" style="left:525.00px;top:176px;color:#e6e6e6;font-size:7.9px;letter-spacing:-0.138px;">Knife Project</span>
<div style="left:525px;top:184.2px;width:5.26955px;height:0.7px;background:#d0d0d0;"></div>
<span class="t" style="left:525.00px;top:188px;color:#e6e6e6;font-size:7.9px;letter-spacing:-0.054px;">Knife Topology Tool</span>
<div style="left:536.256px;top:196.5px;width:2.19472px;height:0.7px;background:#d0d0d0;"></div>
<span class="t" style="left:525.00px;top:201px;color:#e6e6e6;font-size:7.9px;letter-spacing:-0.145px;">Convex Hull</span>
<div style="left:525px;top:209.7px;width:5.70528px;height:0.7px;background:#d0d0d0;"></div>
<span class="t" style="left:525.00px;top:218px;color:#e6e6e6;font-size:7.9px;letter-spacing:-0.270px;">Symmetrize</span>
<div style="left:530px;top:226.5px;width:3.95px;height:0.7px;background:#d0d0d0;"></div>
<span class="t" style="left:525.00px;top:231px;color:#e6e6e6;font-size:7.9px;letter-spacing:-0.292px;">Snap to Symmetry</span>
<div style="left:546.085px;top:239.1px;width:4.39376px;height:0.7px;background:#d0d0d0;"></div>
<span class="t" style="left:525.00px;top:247px;color:#e6e6e6;font-size:7.9px;letter-spacing:-0.259px;">Normals</span>
<div style="left:525px;top:255.7px;width:5.70528px;height:0.7px;background:#d0d0d0;"></div>
<span class="t" style="left:587.93px;top:247px;color:#7a7a7a;font-size:7.6px;">Alt N</span>
<span class="t" style="left:525.00px;top:260px;color:#e6e6e6;font-size:7.9px;letter-spacing:-0.342px;">Shading</span>
<div style="left:547.548px;top:268.7px;width:4.39376px;height:0.7px;background:#d0d0d0;"></div>
<span class="t" style="left:525.00px;top:272px;color:#e6e6e6;font-size:7.9px;letter-spacing:-0.199px;">Weights</span>
<div style="left:525px;top:281px;width:7.45624px;height:0.7px;background:#d0d0d0;"></div>
<span class="t" style="left:525.00px;top:285px;color:#e6e6e6;font-size:7.9px;letter-spacing:-0.218px;">Set Attribute</span>
<div style="left:538.179px;top:293.5px;width:5.26955px;height:0.7px;background:#d0d0d0;"></div>
<span class="t" style="left:525.00px;top:297px;color:#e6e6e6;font-size:7.9px;letter-spacing:-0.278px;">Sort Elements</span>
<span class="t" style="left:525.00px;top:314px;color:#e6e6e6;font-size:7.9px;letter-spacing:-0.356px;">Show/Hide</span>
<div style="left:545.176px;top:322.7px;width:5.70528px;height:0.7px;background:#d0d0d0;"></div>
<span class="t" style="left:525.00px;top:327px;color:#e6e6e6;font-size:7.9px;letter-spacing:-0.229px;">Clean Up</span>
<div style="left:546.46px;top:335.3px;width:5.70528px;height:0.7px;background:#d0d0d0;"></div>
<span class="t" style="left:525.00px;top:343px;color:#e6e6e6;font-size:7.9px;letter-spacing:-0.339px;">Delete</span>
<span class="t" style="left:599.33px;top:343px;color:#7a7a7a;font-size:7.6px;">X</span>
<div style="left:509.7px;top:88.5px;width:99.2px;height:0.8px;background:#303030;"></div>
<div style="left:509.7px;top:118.1px;width:99.2px;height:0.8px;background:#303030;"></div>
<div style="left:509.7px;top:159.9px;width:99.2px;height:0.8px;background:#303030;"></div>
<div style="left:509.7px;top:214.4px;width:99.2px;height:0.8px;background:#303030;"></div>
<div style="left:509.7px;top:243.8px;width:99.2px;height:0.8px;background:#303030;"></div>
<div style="left:509.7px;top:310.6px;width:99.2px;height:0.8px;background:#303030;"></div>
<div style="left:509.7px;top:340px;width:99.2px;height:0.8px;background:#303030;"></div>
<svg style="left:505.2px;top:47.3px;" width="108.2" height="309.8" viewBox="0 0 108.2 309.8"><path d="M101.0,6.7 l3.5,2 l-3.5,2 Z" fill="#a8a8a8"/><path d="M101.0,19.2 l3.5,2 l-3.5,2 Z" fill="#a8a8a8"/><path d="M101.0,31.8 l3.5,2 l-3.5,2 Z" fill="#a8a8a8"/><path d="M101.0,61.2 l3.5,2 l-3.5,2 Z" fill="#a8a8a8"/><path d="M101.0,77.9 l3.5,2 l-3.5,2 Z" fill="#a8a8a8"/><path d="M101.0,90.5 l3.5,2 l-3.5,2 Z" fill="#a8a8a8"/><path d="M101.0,103.1 l3.5,2 l-3.5,2 Z" fill="#a8a8a8"/><path d="M101.0,203.6 l3.5,2 l-3.5,2 Z" fill="#a8a8a8"/><path d="M101.0,216.6 l3.5,2 l-3.5,2 Z" fill="#a8a8a8"/><path d="M101.0,228.9 l3.5,2 l-3.5,2 Z" fill="#a8a8a8"/><path d="M101.0,253.8 l3.5,2 l-3.5,2 Z" fill="#a8a8a8"/><path d="M101.0,270.6 l3.5,2 l-3.5,2 Z" fill="#a8a8a8"/><path d="M101.0,283.2 l3.5,2 l-3.5,2 Z" fill="#a8a8a8"/><path d="M101.0,299.9 l3.5,2 l-3.5,2 Z" fill="#a8a8a8"/></svg>
<div style="left:556.4px;top:303.4px;width:200.6px;height:18.9px;background:#1a1a1a;border-radius:3.5px;box-shadow:0 1px 3px rgba(0,0,0,0.5);"></div>
<span class="t" style="left:564.00px;top:307px;color:#ececec;font-size:7.9px;letter-spacing:-0.154px;">Set values of the active attribute for selected elements.</span>
<svg style="left:0px;top:0px;" width="210" height="141" viewBox="0 0 210 141"><rect x="0" y="0" width="208.3" height="139.55" fill="#ffffff"/><rect x="0" y="0" width="68.6" height="139.55" fill="#33964a"/><rect x="140.2" y="0" width="68.1" height="139.55" fill="#de2428"/></svg>
</div></body></html>
